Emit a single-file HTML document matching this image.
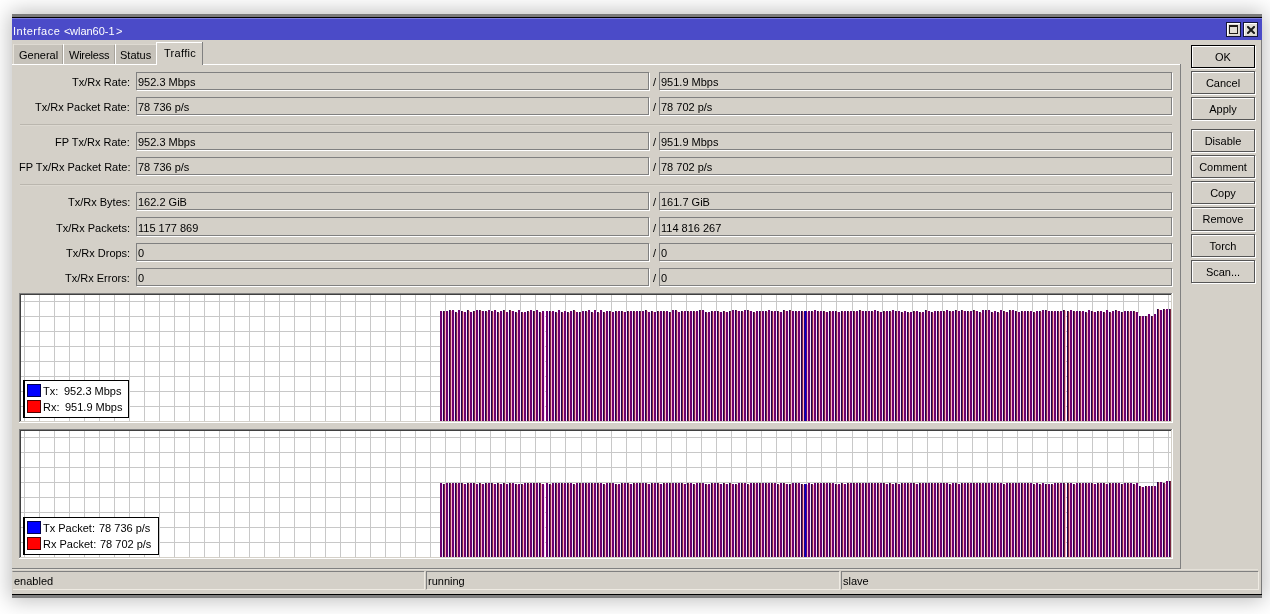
<!DOCTYPE html><html><head><meta charset="utf-8"><style>
html,body{margin:0;padding:0;width:1277px;height:614px;overflow:hidden;background:#fff;}
.r{position:absolute;}
.t{position:absolute;white-space:nowrap;will-change:transform;font-size:11px;line-height:13px;font-family:'Liberation Sans',sans-serif;color:#000;}
</style></head><body>
<div class="r" style="left:0;top:0;width:1270px;height:614px;overflow:hidden;">
<div class="r" style="left:12px;top:14px;width:1250px;height:584px;background:#d4d0c8;box-shadow:0 0 20px 2px rgba(0,0,0,0.27);"></div>
</div>
<div class="r" style="left:12px;top:14px;width:1250px;height:3px;background:#7a7a7a;"></div>
<div class="r" style="left:12px;top:17px;width:1250px;height:1px;background:#000;"></div>
<div class="r" style="left:12px;top:18px;width:1250px;height:1px;background:#7b7bdc;"></div>
<div class="r" style="left:12px;top:19px;width:1250px;height:21px;background:#4b4bc8;"></div>
<div class="r" style="left:12px;top:594px;width:1250px;height:1px;background:#000;"></div>
<div class="r" style="left:12px;top:595px;width:1250px;height:3px;background:#808080;"></div>
<div class="r" style="left:1261px;top:40px;width:1px;height:554px;background:#7a7a7a;"></div>
<div class="t" style="left:13px;top:25px;color:#fff;letter-spacing:0.5px;">Interface</div>
<div class="t" style="left:64px;top:25px;color:#fff;">&lt;</div>
<div class="t" style="left:70px;top:25px;color:#fff;">wlan60-1</div>
<div class="t" style="left:116px;top:25px;color:#fff;">&gt;</div>
<div class="r" style="left:1226px;top:22px;width:13px;height:13px;border:1px solid #141438;background:#e2ded6;box-shadow:inset 1px 1px 0 #fff,inset -1px -1px 0 #d8d4cc;"></div>
<div class="r" style="left:1243px;top:22px;width:13px;height:13px;border:1px solid #141438;background:#e2ded6;box-shadow:inset 1px 1px 0 #fff,inset -1px -1px 0 #d8d4cc;"></div>
<div class="r" style="left:1229px;top:25px;width:9px;height:9px;background:transparent;border:1px solid #201c18;border-top-width:2px;box-sizing:border-box;"></div>
<svg class="r" style="left:1247px;top:26px" width="8" height="8" viewBox="0 0 8 8"><path d="M1 1 L7 7 M7 1 L1 7" stroke="#1a1a1a" stroke-width="2" stroke-linecap="square"/></svg>
<div class="r" style="left:12px;top:64px;width:144px;height:1px;background:#fff;"></div>
<div class="r" style="left:203px;top:64px;width:977px;height:1px;background:#fff;"></div>
<div class="r" style="left:13px;top:44px;width:49px;height:1px;background:#dedad2;"></div>
<div class="r" style="left:13px;top:44px;width:1px;height:20px;background:#e6e2da;"></div>
<div class="r" style="left:14px;top:45px;width:48px;height:19px;background:#c6c2ba;"></div>
<div class="t" style="left:19px;top:49px;">General</div>
<div class="r" style="left:63px;top:44px;width:51px;height:1px;background:#dedad2;"></div>
<div class="r" style="left:63px;top:44px;width:1px;height:20px;background:#e6e2da;"></div>
<div class="r" style="left:64px;top:45px;width:50px;height:19px;background:#c6c2ba;"></div>
<div class="t" style="left:69px;top:49px;letter-spacing:-0.25px;">Wireless</div>
<div class="r" style="left:115px;top:44px;width:41px;height:1px;background:#dedad2;"></div>
<div class="r" style="left:115px;top:44px;width:1px;height:20px;background:#e6e2da;"></div>
<div class="r" style="left:116px;top:45px;width:40px;height:19px;background:#c6c2ba;"></div>
<div class="t" style="left:120px;top:49px;">Status</div>
<div class="r" style="left:62px;top:45px;width:1px;height:19px;background:#a8a49c;"></div>
<div class="r" style="left:114px;top:45px;width:1px;height:19px;background:#a8a49c;"></div>
<div class="r" style="left:115px;top:44px;width:1px;height:20px;background:#fff;"></div>
<div class="r" style="left:63px;top:44px;width:1px;height:20px;background:#fff;"></div>
<div class="r" style="left:156px;top:42px;width:46px;height:1px;background:#fff;"></div>
<div class="r" style="left:156px;top:42px;width:1px;height:23px;background:#fff;"></div>
<div class="r" style="left:157px;top:43px;width:45px;height:22px;background:#d4d0c8;"></div>
<div class="r" style="left:202px;top:42px;width:1px;height:23px;background:#808080;"></div>
<div class="t" style="left:164px;top:47px;letter-spacing:0.3px;">Traffic</div>
<div class="r" style="left:1180px;top:64px;width:1px;height:505px;background:#808080;"></div>
<div class="r" style="left:12px;top:568px;width:1169px;height:1px;background:#808080;"></div>
<div class="r" style="left:12px;top:569px;width:1246px;height:1px;background:#e4e0d8;"></div>
<div class="r" style="left:136px;top:72px;width:511px;height:16px;border:1px solid #808080;background:#d4d0c8;box-shadow:1px 1px 0 #fff;"></div>
<div class="r" style="left:659px;top:72px;width:511px;height:16px;border:1px solid #808080;background:#d4d0c8;box-shadow:1px 1px 0 #fff;"></div>
<div class="t" style="right:1147px;top:76px;">Tx/Rx Rate:</div>
<div class="t" style="left:138px;top:76px;">952.3 Mbps</div>
<div class="t" style="left:661px;top:76px;">951.9 Mbps</div>
<div class="t" style="left:653px;top:76px;">/</div>
<div class="r" style="left:136px;top:97px;width:511px;height:16px;border:1px solid #808080;background:#d4d0c8;box-shadow:1px 1px 0 #fff;"></div>
<div class="r" style="left:659px;top:97px;width:511px;height:16px;border:1px solid #808080;background:#d4d0c8;box-shadow:1px 1px 0 #fff;"></div>
<div class="t" style="right:1147px;top:101px;">Tx/Rx Packet Rate:</div>
<div class="t" style="left:138px;top:101px;">78 736 p/s</div>
<div class="t" style="left:661px;top:101px;">78 702 p/s</div>
<div class="t" style="left:653px;top:101px;">/</div>
<div class="r" style="left:136px;top:132px;width:511px;height:16px;border:1px solid #808080;background:#d4d0c8;box-shadow:1px 1px 0 #fff;"></div>
<div class="r" style="left:659px;top:132px;width:511px;height:16px;border:1px solid #808080;background:#d4d0c8;box-shadow:1px 1px 0 #fff;"></div>
<div class="t" style="right:1147px;top:136px;">FP Tx/Rx Rate:</div>
<div class="t" style="left:138px;top:136px;">952.3 Mbps</div>
<div class="t" style="left:661px;top:136px;">951.9 Mbps</div>
<div class="t" style="left:653px;top:136px;">/</div>
<div class="r" style="left:136px;top:157px;width:511px;height:16px;border:1px solid #808080;background:#d4d0c8;box-shadow:1px 1px 0 #fff;"></div>
<div class="r" style="left:659px;top:157px;width:511px;height:16px;border:1px solid #808080;background:#d4d0c8;box-shadow:1px 1px 0 #fff;"></div>
<div class="t" style="right:1147px;top:161px;">FP Tx/Rx Packet Rate:</div>
<div class="t" style="left:138px;top:161px;">78 736 p/s</div>
<div class="t" style="left:661px;top:161px;">78 702 p/s</div>
<div class="t" style="left:653px;top:161px;">/</div>
<div class="r" style="left:136px;top:192px;width:511px;height:16px;border:1px solid #808080;background:#d4d0c8;box-shadow:1px 1px 0 #fff;"></div>
<div class="r" style="left:659px;top:192px;width:511px;height:16px;border:1px solid #808080;background:#d4d0c8;box-shadow:1px 1px 0 #fff;"></div>
<div class="t" style="right:1147px;top:196px;">Tx/Rx Bytes:</div>
<div class="t" style="left:138px;top:196px;">162.2 GiB</div>
<div class="t" style="left:661px;top:196px;">161.7 GiB</div>
<div class="t" style="left:653px;top:196px;">/</div>
<div class="r" style="left:136px;top:217px;width:511px;height:17px;border:1px solid #808080;background:#d4d0c8;box-shadow:1px 1px 0 #fff;"></div>
<div class="r" style="left:659px;top:217px;width:511px;height:17px;border:1px solid #808080;background:#d4d0c8;box-shadow:1px 1px 0 #fff;"></div>
<div class="t" style="right:1147px;top:222px;">Tx/Rx Packets:</div>
<div class="t" style="left:138px;top:222px;">115 177 869</div>
<div class="t" style="left:661px;top:222px;">114 816 267</div>
<div class="t" style="left:653px;top:222px;">/</div>
<div class="r" style="left:136px;top:243px;width:511px;height:16px;border:1px solid #808080;background:#d4d0c8;box-shadow:1px 1px 0 #fff;"></div>
<div class="r" style="left:659px;top:243px;width:511px;height:16px;border:1px solid #808080;background:#d4d0c8;box-shadow:1px 1px 0 #fff;"></div>
<div class="t" style="right:1147px;top:247px;">Tx/Rx Drops:</div>
<div class="t" style="left:138px;top:247px;">0</div>
<div class="t" style="left:661px;top:247px;">0</div>
<div class="t" style="left:653px;top:247px;">/</div>
<div class="r" style="left:136px;top:268px;width:511px;height:16px;border:1px solid #808080;background:#d4d0c8;box-shadow:1px 1px 0 #fff;"></div>
<div class="r" style="left:659px;top:268px;width:511px;height:16px;border:1px solid #808080;background:#d4d0c8;box-shadow:1px 1px 0 #fff;"></div>
<div class="t" style="right:1147px;top:272px;">Tx/Rx Errors:</div>
<div class="t" style="left:138px;top:272px;">0</div>
<div class="t" style="left:661px;top:272px;">0</div>
<div class="t" style="left:653px;top:272px;">/</div>
<div class="r" style="left:20px;top:124px;width:1152px;height:1px;background:#bab6ae;"></div>
<div class="r" style="left:20px;top:125px;width:1152px;height:1px;background:#dcd8d0;"></div>
<div class="r" style="left:20px;top:184px;width:1152px;height:1px;background:#bab6ae;"></div>
<div class="r" style="left:20px;top:185px;width:1152px;height:1px;background:#dcd8d0;"></div>
<div class="r" style="left:19px;top:293px;width:1153px;height:1px;background:#808080;"></div>
<div class="r" style="left:19px;top:293px;width:1px;height:129px;background:#808080;"></div>
<div class="r" style="left:20px;top:294px;width:1151px;height:1px;background:#404040;"></div>
<div class="r" style="left:20px;top:294px;width:1px;height:127px;background:#404040;"></div>
<div class="r" style="left:19px;top:422px;width:1154px;height:1px;background:#fff;"></div>
<div class="r" style="left:1172px;top:293px;width:1px;height:130px;background:#fff;"></div>
<div class="r" style="left:21px;top:295px;width:1150px;height:126px;background:#fff;"></div>
<div class="r" style="left:20px;top:421px;width:1152px;height:1px;background:#d4d0c8;"></div>
<div class="r" style="left:1171px;top:294px;width:1px;height:128px;background:#d4d0c8;"></div>
<svg class="r" style="left:21px;top:295px" width="1150" height="126"><rect x="3" y="0" width="1" height="126" fill="#c8c8c8"/><rect x="18" y="0" width="1" height="126" fill="#c8c8c8"/><rect x="33" y="0" width="1" height="126" fill="#c8c8c8"/><rect x="48" y="0" width="1" height="126" fill="#c8c8c8"/><rect x="63" y="0" width="1" height="126" fill="#c8c8c8"/><rect x="78" y="0" width="1" height="126" fill="#c8c8c8"/><rect x="93" y="0" width="1" height="126" fill="#c8c8c8"/><rect x="108" y="0" width="1" height="126" fill="#c8c8c8"/><rect x="123" y="0" width="1" height="126" fill="#c8c8c8"/><rect x="138" y="0" width="1" height="126" fill="#c8c8c8"/><rect x="153" y="0" width="1" height="126" fill="#c8c8c8"/><rect x="168" y="0" width="1" height="126" fill="#c8c8c8"/><rect x="183" y="0" width="1" height="126" fill="#c8c8c8"/><rect x="198" y="0" width="1" height="126" fill="#c8c8c8"/><rect x="213" y="0" width="1" height="126" fill="#c8c8c8"/><rect x="228" y="0" width="1" height="126" fill="#c8c8c8"/><rect x="243" y="0" width="1" height="126" fill="#c8c8c8"/><rect x="258" y="0" width="1" height="126" fill="#c8c8c8"/><rect x="273" y="0" width="1" height="126" fill="#c8c8c8"/><rect x="289" y="0" width="1" height="126" fill="#c8c8c8"/><rect x="304" y="0" width="1" height="126" fill="#c8c8c8"/><rect x="319" y="0" width="1" height="126" fill="#c8c8c8"/><rect x="334" y="0" width="1" height="126" fill="#c8c8c8"/><rect x="349" y="0" width="1" height="126" fill="#c8c8c8"/><rect x="364" y="0" width="1" height="126" fill="#c8c8c8"/><rect x="379" y="0" width="1" height="126" fill="#c8c8c8"/><rect x="394" y="0" width="1" height="126" fill="#c8c8c8"/><rect x="409" y="0" width="1" height="126" fill="#c8c8c8"/><rect x="424" y="0" width="1" height="126" fill="#c8c8c8"/><rect x="439" y="0" width="1" height="126" fill="#c8c8c8"/><rect x="454" y="0" width="1" height="126" fill="#c8c8c8"/><rect x="469" y="0" width="1" height="126" fill="#c8c8c8"/><rect x="484" y="0" width="1" height="126" fill="#c8c8c8"/><rect x="499" y="0" width="1" height="126" fill="#c8c8c8"/><rect x="514" y="0" width="1" height="126" fill="#c8c8c8"/><rect x="529" y="0" width="1" height="126" fill="#c8c8c8"/><rect x="544" y="0" width="1" height="126" fill="#c8c8c8"/><rect x="560" y="0" width="1" height="126" fill="#c8c8c8"/><rect x="575" y="0" width="1" height="126" fill="#c8c8c8"/><rect x="590" y="0" width="1" height="126" fill="#c8c8c8"/><rect x="605" y="0" width="1" height="126" fill="#c8c8c8"/><rect x="620" y="0" width="1" height="126" fill="#c8c8c8"/><rect x="635" y="0" width="1" height="126" fill="#c8c8c8"/><rect x="650" y="0" width="1" height="126" fill="#c8c8c8"/><rect x="665" y="0" width="1" height="126" fill="#c8c8c8"/><rect x="680" y="0" width="1" height="126" fill="#c8c8c8"/><rect x="695" y="0" width="1" height="126" fill="#c8c8c8"/><rect x="710" y="0" width="1" height="126" fill="#c8c8c8"/><rect x="725" y="0" width="1" height="126" fill="#c8c8c8"/><rect x="740" y="0" width="1" height="126" fill="#c8c8c8"/><rect x="755" y="0" width="1" height="126" fill="#c8c8c8"/><rect x="770" y="0" width="1" height="126" fill="#c8c8c8"/><rect x="785" y="0" width="1" height="126" fill="#c8c8c8"/><rect x="800" y="0" width="1" height="126" fill="#c8c8c8"/><rect x="815" y="0" width="1" height="126" fill="#c8c8c8"/><rect x="831" y="0" width="1" height="126" fill="#c8c8c8"/><rect x="846" y="0" width="1" height="126" fill="#c8c8c8"/><rect x="861" y="0" width="1" height="126" fill="#c8c8c8"/><rect x="876" y="0" width="1" height="126" fill="#c8c8c8"/><rect x="891" y="0" width="1" height="126" fill="#c8c8c8"/><rect x="906" y="0" width="1" height="126" fill="#c8c8c8"/><rect x="921" y="0" width="1" height="126" fill="#c8c8c8"/><rect x="936" y="0" width="1" height="126" fill="#c8c8c8"/><rect x="951" y="0" width="1" height="126" fill="#c8c8c8"/><rect x="966" y="0" width="1" height="126" fill="#c8c8c8"/><rect x="981" y="0" width="1" height="126" fill="#c8c8c8"/><rect x="996" y="0" width="1" height="126" fill="#c8c8c8"/><rect x="1011" y="0" width="1" height="126" fill="#c8c8c8"/><rect x="1026" y="0" width="1" height="126" fill="#c8c8c8"/><rect x="1041" y="0" width="1" height="126" fill="#c8c8c8"/><rect x="1056" y="0" width="1" height="126" fill="#c8c8c8"/><rect x="1071" y="0" width="1" height="126" fill="#c8c8c8"/><rect x="1086" y="0" width="1" height="126" fill="#c8c8c8"/><rect x="1102" y="0" width="1" height="126" fill="#c8c8c8"/><rect x="1117" y="0" width="1" height="126" fill="#c8c8c8"/><rect x="1132" y="0" width="1" height="126" fill="#c8c8c8"/><rect x="1147" y="0" width="1" height="126" fill="#c8c8c8"/><rect x="0" y="6" width="1150" height="1" fill="#c8c8c8"/><rect x="0" y="21" width="1150" height="1" fill="#c8c8c8"/><rect x="0" y="36" width="1150" height="1" fill="#c8c8c8"/><rect x="0" y="51" width="1150" height="1" fill="#c8c8c8"/><rect x="0" y="66" width="1150" height="1" fill="#c8c8c8"/><rect x="0" y="81" width="1150" height="1" fill="#c8c8c8"/><rect x="0" y="96" width="1150" height="1" fill="#c8c8c8"/><rect x="0" y="111" width="1150" height="1" fill="#c8c8c8"/><rect x="419" y="16" width="2" height="110" fill="#700070"/><rect x="421" y="17" width="1" height="109" fill="#f8e0f8"/><rect x="422" y="16" width="1" height="110" fill="#200050"/><rect x="423" y="16" width="1" height="110" fill="#7a2840"/><rect x="424" y="17" width="1" height="109" fill="#ffb0c4"/><rect x="425" y="16" width="2" height="110" fill="#700070"/><rect x="427" y="17" width="1" height="109" fill="#f8e0f8"/><rect x="428" y="15" width="1" height="111" fill="#200050"/><rect x="429" y="15" width="1" height="111" fill="#7a2840"/><rect x="430" y="16" width="1" height="110" fill="#ffb0c4"/><rect x="431" y="15" width="2" height="111" fill="#700070"/><rect x="433" y="16" width="1" height="110" fill="#f8e0f8"/><rect x="434" y="17" width="1" height="109" fill="#200050"/><rect x="435" y="17" width="1" height="109" fill="#7a2840"/><rect x="436" y="18" width="1" height="108" fill="#ffb0c4"/><rect x="437" y="15" width="2" height="111" fill="#700070"/><rect x="439" y="16" width="1" height="110" fill="#f8e0f8"/><rect x="440" y="16" width="1" height="110" fill="#200050"/><rect x="441" y="16" width="1" height="110" fill="#7a2840"/><rect x="442" y="17" width="1" height="109" fill="#ffb0c4"/><rect x="443" y="17" width="2" height="109" fill="#700070"/><rect x="445" y="18" width="1" height="108" fill="#f8e0f8"/><rect x="446" y="15" width="1" height="111" fill="#200050"/><rect x="447" y="15" width="1" height="111" fill="#7a2840"/><rect x="448" y="16" width="1" height="110" fill="#ffb0c4"/><rect x="449" y="17" width="2" height="109" fill="#700070"/><rect x="451" y="18" width="1" height="108" fill="#f8e0f8"/><rect x="452" y="16" width="1" height="110" fill="#200050"/><rect x="453" y="16" width="1" height="110" fill="#7a2840"/><rect x="454" y="17" width="1" height="109" fill="#ffb0c4"/><rect x="455" y="15" width="2" height="111" fill="#700070"/><rect x="457" y="16" width="1" height="110" fill="#f8e0f8"/><rect x="458" y="15" width="1" height="111" fill="#200050"/><rect x="459" y="15" width="1" height="111" fill="#7a2840"/><rect x="460" y="16" width="1" height="110" fill="#ffb0c4"/><rect x="461" y="16" width="2" height="110" fill="#700070"/><rect x="463" y="17" width="1" height="109" fill="#f8e0f8"/><rect x="464" y="16" width="1" height="110" fill="#200050"/><rect x="465" y="16" width="1" height="110" fill="#7a2840"/><rect x="466" y="17" width="1" height="109" fill="#ffb0c4"/><rect x="467" y="15" width="2" height="111" fill="#700070"/><rect x="469" y="16" width="1" height="110" fill="#f8e0f8"/><rect x="470" y="16" width="1" height="110" fill="#200050"/><rect x="471" y="16" width="1" height="110" fill="#7a2840"/><rect x="472" y="17" width="1" height="109" fill="#ffb0c4"/><rect x="473" y="15" width="2" height="111" fill="#700070"/><rect x="475" y="16" width="1" height="110" fill="#f8e0f8"/><rect x="476" y="17" width="1" height="109" fill="#200050"/><rect x="477" y="17" width="1" height="109" fill="#7a2840"/><rect x="478" y="18" width="1" height="108" fill="#ffb0c4"/><rect x="479" y="16" width="2" height="110" fill="#700070"/><rect x="481" y="17" width="1" height="109" fill="#f8e0f8"/><rect x="482" y="15" width="1" height="111" fill="#200050"/><rect x="483" y="15" width="1" height="111" fill="#7a2840"/><rect x="484" y="16" width="1" height="110" fill="#ffb0c4"/><rect x="485" y="17" width="2" height="109" fill="#700070"/><rect x="487" y="18" width="1" height="108" fill="#f8e0f8"/><rect x="488" y="15" width="1" height="111" fill="#200050"/><rect x="489" y="15" width="1" height="111" fill="#7a2840"/><rect x="490" y="16" width="1" height="110" fill="#ffb0c4"/><rect x="491" y="16" width="2" height="110" fill="#700070"/><rect x="493" y="17" width="1" height="109" fill="#f8e0f8"/><rect x="494" y="17" width="1" height="109" fill="#200050"/><rect x="495" y="17" width="1" height="109" fill="#7a2840"/><rect x="496" y="18" width="1" height="108" fill="#ffb0c4"/><rect x="497" y="15" width="2" height="111" fill="#700070"/><rect x="499" y="16" width="1" height="110" fill="#f8e0f8"/><rect x="500" y="17" width="1" height="109" fill="#200050"/><rect x="501" y="17" width="1" height="109" fill="#7a2840"/><rect x="502" y="18" width="1" height="108" fill="#ffb0c4"/><rect x="503" y="17" width="2" height="109" fill="#700070"/><rect x="505" y="18" width="1" height="108" fill="#f8e0f8"/><rect x="506" y="16" width="1" height="110" fill="#200050"/><rect x="507" y="16" width="1" height="110" fill="#7a2840"/><rect x="508" y="17" width="1" height="109" fill="#ffb0c4"/><rect x="509" y="15" width="2" height="111" fill="#700070"/><rect x="511" y="16" width="1" height="110" fill="#f8e0f8"/><rect x="512" y="16" width="1" height="110" fill="#200050"/><rect x="513" y="16" width="1" height="110" fill="#7a2840"/><rect x="514" y="17" width="1" height="109" fill="#ffb0c4"/><rect x="515" y="15" width="2" height="111" fill="#700070"/><rect x="517" y="16" width="1" height="110" fill="#f8e0f8"/><rect x="518" y="17" width="1" height="109" fill="#200050"/><rect x="519" y="17" width="1" height="109" fill="#7a2840"/><rect x="520" y="18" width="1" height="108" fill="#ffb0c4"/><rect x="521" y="16" width="2" height="110" fill="#700070"/><rect x="523" y="17" width="1" height="109" fill="#f8e0f8"/><rect x="525" y="16" width="2" height="110" fill="#700070"/><rect x="527" y="17" width="1" height="109" fill="#f8e0f8"/><rect x="528" y="16" width="1" height="110" fill="#200050"/><rect x="529" y="16" width="1" height="110" fill="#7a2840"/><rect x="530" y="17" width="1" height="109" fill="#ffb0c4"/><rect x="531" y="16" width="2" height="110" fill="#700070"/><rect x="533" y="17" width="1" height="109" fill="#f8e0f8"/><rect x="534" y="17" width="1" height="109" fill="#200050"/><rect x="535" y="17" width="1" height="109" fill="#7a2840"/><rect x="536" y="18" width="1" height="108" fill="#ffb0c4"/><rect x="537" y="15" width="2" height="111" fill="#700070"/><rect x="539" y="16" width="1" height="110" fill="#f8e0f8"/><rect x="540" y="17" width="1" height="109" fill="#200050"/><rect x="541" y="17" width="1" height="109" fill="#7a2840"/><rect x="542" y="18" width="1" height="108" fill="#ffb0c4"/><rect x="543" y="16" width="2" height="110" fill="#700070"/><rect x="545" y="17" width="1" height="109" fill="#f8e0f8"/><rect x="546" y="17" width="1" height="109" fill="#200050"/><rect x="547" y="17" width="1" height="109" fill="#7a2840"/><rect x="548" y="18" width="1" height="108" fill="#ffb0c4"/><rect x="549" y="16" width="2" height="110" fill="#700070"/><rect x="551" y="17" width="1" height="109" fill="#f8e0f8"/><rect x="552" y="15" width="1" height="111" fill="#200050"/><rect x="553" y="15" width="1" height="111" fill="#7a2840"/><rect x="554" y="16" width="1" height="110" fill="#ffb0c4"/><rect x="555" y="17" width="2" height="109" fill="#700070"/><rect x="557" y="18" width="1" height="108" fill="#f8e0f8"/><rect x="558" y="17" width="1" height="109" fill="#200050"/><rect x="559" y="17" width="1" height="109" fill="#7a2840"/><rect x="560" y="18" width="1" height="108" fill="#ffb0c4"/><rect x="561" y="16" width="2" height="110" fill="#700070"/><rect x="563" y="17" width="1" height="109" fill="#f8e0f8"/><rect x="564" y="16" width="1" height="110" fill="#200050"/><rect x="565" y="16" width="1" height="110" fill="#7a2840"/><rect x="566" y="17" width="1" height="109" fill="#ffb0c4"/><rect x="567" y="15" width="2" height="111" fill="#700070"/><rect x="569" y="16" width="1" height="110" fill="#f8e0f8"/><rect x="570" y="17" width="1" height="109" fill="#200050"/><rect x="571" y="17" width="1" height="109" fill="#7a2840"/><rect x="572" y="18" width="1" height="108" fill="#ffb0c4"/><rect x="573" y="15" width="2" height="111" fill="#700070"/><rect x="575" y="16" width="1" height="110" fill="#f8e0f8"/><rect x="576" y="17" width="1" height="109" fill="#200050"/><rect x="577" y="17" width="1" height="109" fill="#7a2840"/><rect x="578" y="18" width="1" height="108" fill="#ffb0c4"/><rect x="579" y="15" width="2" height="111" fill="#700070"/><rect x="581" y="16" width="1" height="110" fill="#f8e0f8"/><rect x="582" y="17" width="1" height="109" fill="#200050"/><rect x="583" y="17" width="1" height="109" fill="#7a2840"/><rect x="584" y="18" width="1" height="108" fill="#ffb0c4"/><rect x="585" y="16" width="2" height="110" fill="#700070"/><rect x="587" y="17" width="1" height="109" fill="#f8e0f8"/><rect x="588" y="16" width="1" height="110" fill="#200050"/><rect x="589" y="16" width="1" height="110" fill="#7a2840"/><rect x="590" y="17" width="1" height="109" fill="#ffb0c4"/><rect x="591" y="17" width="2" height="109" fill="#700070"/><rect x="593" y="18" width="1" height="108" fill="#f8e0f8"/><rect x="594" y="16" width="1" height="110" fill="#200050"/><rect x="595" y="16" width="1" height="110" fill="#7a2840"/><rect x="596" y="17" width="1" height="109" fill="#ffb0c4"/><rect x="597" y="16" width="2" height="110" fill="#700070"/><rect x="599" y="17" width="1" height="109" fill="#f8e0f8"/><rect x="600" y="16" width="1" height="110" fill="#200050"/><rect x="601" y="16" width="1" height="110" fill="#7a2840"/><rect x="602" y="17" width="1" height="109" fill="#ffb0c4"/><rect x="603" y="17" width="2" height="109" fill="#700070"/><rect x="605" y="18" width="1" height="108" fill="#f8e0f8"/><rect x="606" y="16" width="1" height="110" fill="#200050"/><rect x="607" y="16" width="1" height="110" fill="#7a2840"/><rect x="608" y="17" width="1" height="109" fill="#ffb0c4"/><rect x="609" y="16" width="2" height="110" fill="#700070"/><rect x="611" y="17" width="1" height="109" fill="#f8e0f8"/><rect x="612" y="16" width="1" height="110" fill="#200050"/><rect x="613" y="16" width="1" height="110" fill="#7a2840"/><rect x="614" y="17" width="1" height="109" fill="#ffb0c4"/><rect x="615" y="16" width="2" height="110" fill="#700070"/><rect x="617" y="17" width="1" height="109" fill="#f8e0f8"/><rect x="618" y="16" width="1" height="110" fill="#200050"/><rect x="619" y="16" width="1" height="110" fill="#7a2840"/><rect x="620" y="17" width="1" height="109" fill="#ffb0c4"/><rect x="621" y="16" width="2" height="110" fill="#700070"/><rect x="623" y="17" width="1" height="109" fill="#f8e0f8"/><rect x="624" y="15" width="1" height="111" fill="#200050"/><rect x="625" y="15" width="1" height="111" fill="#7a2840"/><rect x="626" y="16" width="1" height="110" fill="#ffb0c4"/><rect x="627" y="17" width="2" height="109" fill="#700070"/><rect x="629" y="18" width="1" height="108" fill="#f8e0f8"/><rect x="630" y="16" width="1" height="110" fill="#200050"/><rect x="631" y="16" width="1" height="110" fill="#7a2840"/><rect x="632" y="17" width="1" height="109" fill="#ffb0c4"/><rect x="633" y="17" width="2" height="109" fill="#700070"/><rect x="635" y="18" width="1" height="108" fill="#f8e0f8"/><rect x="636" y="16" width="1" height="110" fill="#200050"/><rect x="637" y="16" width="1" height="110" fill="#7a2840"/><rect x="638" y="17" width="1" height="109" fill="#ffb0c4"/><rect x="639" y="16" width="2" height="110" fill="#700070"/><rect x="641" y="17" width="1" height="109" fill="#f8e0f8"/><rect x="642" y="16" width="1" height="110" fill="#200050"/><rect x="643" y="16" width="1" height="110" fill="#7a2840"/><rect x="644" y="17" width="1" height="109" fill="#ffb0c4"/><rect x="645" y="16" width="2" height="110" fill="#700070"/><rect x="647" y="17" width="1" height="109" fill="#f8e0f8"/><rect x="648" y="17" width="1" height="109" fill="#200050"/><rect x="649" y="17" width="1" height="109" fill="#7a2840"/><rect x="650" y="18" width="1" height="108" fill="#ffb0c4"/><rect x="651" y="15" width="2" height="111" fill="#700070"/><rect x="653" y="16" width="1" height="110" fill="#f8e0f8"/><rect x="654" y="15" width="1" height="111" fill="#200050"/><rect x="655" y="15" width="1" height="111" fill="#7a2840"/><rect x="656" y="16" width="1" height="110" fill="#ffb0c4"/><rect x="657" y="17" width="2" height="109" fill="#700070"/><rect x="659" y="18" width="1" height="108" fill="#f8e0f8"/><rect x="660" y="16" width="1" height="110" fill="#200050"/><rect x="661" y="16" width="1" height="110" fill="#7a2840"/><rect x="662" y="17" width="1" height="109" fill="#ffb0c4"/><rect x="663" y="16" width="2" height="110" fill="#700070"/><rect x="665" y="17" width="1" height="109" fill="#f8e0f8"/><rect x="666" y="16" width="1" height="110" fill="#200050"/><rect x="667" y="16" width="1" height="110" fill="#7a2840"/><rect x="668" y="17" width="1" height="109" fill="#ffb0c4"/><rect x="669" y="16" width="2" height="110" fill="#700070"/><rect x="671" y="17" width="1" height="109" fill="#f8e0f8"/><rect x="672" y="16" width="1" height="110" fill="#200050"/><rect x="673" y="16" width="1" height="110" fill="#7a2840"/><rect x="674" y="17" width="1" height="109" fill="#ffb0c4"/><rect x="675" y="16" width="2" height="110" fill="#700070"/><rect x="677" y="17" width="1" height="109" fill="#f8e0f8"/><rect x="678" y="15" width="1" height="111" fill="#200050"/><rect x="679" y="15" width="1" height="111" fill="#7a2840"/><rect x="680" y="16" width="1" height="110" fill="#ffb0c4"/><rect x="681" y="15" width="2" height="111" fill="#700070"/><rect x="683" y="16" width="1" height="110" fill="#f8e0f8"/><rect x="684" y="17" width="1" height="109" fill="#200050"/><rect x="685" y="17" width="1" height="109" fill="#7a2840"/><rect x="686" y="18" width="1" height="108" fill="#ffb0c4"/><rect x="687" y="17" width="2" height="109" fill="#700070"/><rect x="689" y="18" width="1" height="108" fill="#f8e0f8"/><rect x="690" y="16" width="1" height="110" fill="#200050"/><rect x="691" y="16" width="1" height="110" fill="#7a2840"/><rect x="692" y="17" width="1" height="109" fill="#ffb0c4"/><rect x="693" y="16" width="2" height="110" fill="#700070"/><rect x="695" y="17" width="1" height="109" fill="#f8e0f8"/><rect x="696" y="16" width="1" height="110" fill="#200050"/><rect x="697" y="16" width="1" height="110" fill="#7a2840"/><rect x="698" y="17" width="1" height="109" fill="#ffb0c4"/><rect x="699" y="17" width="2" height="109" fill="#700070"/><rect x="701" y="18" width="1" height="108" fill="#f8e0f8"/><rect x="702" y="16" width="1" height="110" fill="#200050"/><rect x="703" y="16" width="1" height="110" fill="#7a2840"/><rect x="704" y="17" width="1" height="109" fill="#ffb0c4"/><rect x="705" y="17" width="2" height="109" fill="#700070"/><rect x="707" y="18" width="1" height="108" fill="#f8e0f8"/><rect x="708" y="16" width="1" height="110" fill="#200050"/><rect x="709" y="16" width="1" height="110" fill="#7a2840"/><rect x="710" y="17" width="1" height="109" fill="#ffb0c4"/><rect x="711" y="15" width="2" height="111" fill="#700070"/><rect x="713" y="16" width="1" height="110" fill="#f8e0f8"/><rect x="714" y="15" width="1" height="111" fill="#200050"/><rect x="715" y="15" width="1" height="111" fill="#7a2840"/><rect x="716" y="16" width="1" height="110" fill="#ffb0c4"/><rect x="717" y="16" width="2" height="110" fill="#700070"/><rect x="719" y="17" width="1" height="109" fill="#f8e0f8"/><rect x="720" y="16" width="1" height="110" fill="#200050"/><rect x="721" y="16" width="1" height="110" fill="#7a2840"/><rect x="722" y="17" width="1" height="109" fill="#ffb0c4"/><rect x="723" y="15" width="2" height="111" fill="#700070"/><rect x="725" y="16" width="1" height="110" fill="#f8e0f8"/><rect x="726" y="15" width="1" height="111" fill="#200050"/><rect x="727" y="15" width="1" height="111" fill="#7a2840"/><rect x="728" y="16" width="1" height="110" fill="#ffb0c4"/><rect x="729" y="16" width="2" height="110" fill="#700070"/><rect x="731" y="17" width="1" height="109" fill="#f8e0f8"/><rect x="732" y="17" width="1" height="109" fill="#200050"/><rect x="733" y="17" width="1" height="109" fill="#7a2840"/><rect x="734" y="18" width="1" height="108" fill="#ffb0c4"/><rect x="735" y="16" width="2" height="110" fill="#700070"/><rect x="737" y="17" width="1" height="109" fill="#f8e0f8"/><rect x="738" y="16" width="1" height="110" fill="#200050"/><rect x="739" y="16" width="1" height="110" fill="#7a2840"/><rect x="740" y="17" width="1" height="109" fill="#ffb0c4"/><rect x="741" y="16" width="2" height="110" fill="#700070"/><rect x="743" y="17" width="1" height="109" fill="#f8e0f8"/><rect x="744" y="16" width="1" height="110" fill="#200050"/><rect x="745" y="16" width="1" height="110" fill="#7a2840"/><rect x="746" y="17" width="1" height="109" fill="#ffb0c4"/><rect x="747" y="15" width="2" height="111" fill="#700070"/><rect x="749" y="16" width="1" height="110" fill="#f8e0f8"/><rect x="750" y="16" width="1" height="110" fill="#200050"/><rect x="751" y="16" width="1" height="110" fill="#7a2840"/><rect x="752" y="17" width="1" height="109" fill="#ffb0c4"/><rect x="753" y="16" width="2" height="110" fill="#700070"/><rect x="755" y="17" width="1" height="109" fill="#f8e0f8"/><rect x="756" y="16" width="1" height="110" fill="#200050"/><rect x="757" y="16" width="1" height="110" fill="#7a2840"/><rect x="758" y="17" width="1" height="109" fill="#ffb0c4"/><rect x="759" y="17" width="2" height="109" fill="#700070"/><rect x="761" y="18" width="1" height="108" fill="#f8e0f8"/><rect x="762" y="15" width="1" height="111" fill="#200050"/><rect x="763" y="15" width="1" height="111" fill="#7a2840"/><rect x="764" y="16" width="1" height="110" fill="#ffb0c4"/><rect x="765" y="16" width="2" height="110" fill="#700070"/><rect x="767" y="17" width="1" height="109" fill="#f8e0f8"/><rect x="768" y="15" width="1" height="111" fill="#200050"/><rect x="769" y="15" width="1" height="111" fill="#7a2840"/><rect x="770" y="16" width="1" height="110" fill="#ffb0c4"/><rect x="771" y="16" width="2" height="110" fill="#700070"/><rect x="773" y="17" width="1" height="109" fill="#f8e0f8"/><rect x="774" y="16" width="1" height="110" fill="#200050"/><rect x="775" y="16" width="1" height="110" fill="#7a2840"/><rect x="776" y="17" width="1" height="109" fill="#ffb0c4"/><rect x="777" y="16" width="2" height="110" fill="#700070"/><rect x="779" y="17" width="1" height="109" fill="#f8e0f8"/><rect x="780" y="16" width="1" height="110" fill="#200050"/><rect x="781" y="16" width="1" height="110" fill="#7a2840"/><rect x="782" y="17" width="1" height="109" fill="#ffb0c4"/><rect x="783" y="16" width="1" height="110" fill="#300070"/><rect x="784" y="16" width="1" height="110" fill="#0000d0"/><rect x="785" y="16" width="1" height="110" fill="#500080"/><rect x="786" y="17" width="1" height="109" fill="#ffb0c4"/><rect x="787" y="16" width="2" height="110" fill="#700070"/><rect x="789" y="17" width="1" height="109" fill="#f8e0f8"/><rect x="790" y="16" width="1" height="110" fill="#200050"/><rect x="791" y="16" width="1" height="110" fill="#7a2840"/><rect x="792" y="17" width="1" height="109" fill="#ffb0c4"/><rect x="793" y="15" width="2" height="111" fill="#700070"/><rect x="795" y="16" width="1" height="110" fill="#f8e0f8"/><rect x="796" y="16" width="1" height="110" fill="#200050"/><rect x="797" y="16" width="1" height="110" fill="#7a2840"/><rect x="798" y="17" width="1" height="109" fill="#ffb0c4"/><rect x="799" y="16" width="2" height="110" fill="#700070"/><rect x="801" y="17" width="1" height="109" fill="#f8e0f8"/><rect x="802" y="16" width="1" height="110" fill="#200050"/><rect x="803" y="16" width="1" height="110" fill="#7a2840"/><rect x="804" y="17" width="1" height="109" fill="#ffb0c4"/><rect x="805" y="17" width="2" height="109" fill="#700070"/><rect x="807" y="18" width="1" height="108" fill="#f8e0f8"/><rect x="808" y="16" width="1" height="110" fill="#200050"/><rect x="809" y="16" width="1" height="110" fill="#7a2840"/><rect x="810" y="17" width="1" height="109" fill="#ffb0c4"/><rect x="811" y="16" width="2" height="110" fill="#700070"/><rect x="813" y="17" width="1" height="109" fill="#f8e0f8"/><rect x="814" y="16" width="1" height="110" fill="#200050"/><rect x="815" y="16" width="1" height="110" fill="#7a2840"/><rect x="816" y="17" width="1" height="109" fill="#ffb0c4"/><rect x="817" y="17" width="2" height="109" fill="#700070"/><rect x="819" y="18" width="1" height="108" fill="#f8e0f8"/><rect x="820" y="16" width="1" height="110" fill="#200050"/><rect x="821" y="16" width="1" height="110" fill="#7a2840"/><rect x="822" y="17" width="1" height="109" fill="#ffb0c4"/><rect x="823" y="16" width="2" height="110" fill="#700070"/><rect x="825" y="17" width="1" height="109" fill="#f8e0f8"/><rect x="826" y="16" width="1" height="110" fill="#200050"/><rect x="827" y="16" width="1" height="110" fill="#7a2840"/><rect x="828" y="17" width="1" height="109" fill="#ffb0c4"/><rect x="829" y="16" width="2" height="110" fill="#700070"/><rect x="831" y="17" width="1" height="109" fill="#f8e0f8"/><rect x="832" y="16" width="1" height="110" fill="#200050"/><rect x="833" y="16" width="1" height="110" fill="#7a2840"/><rect x="834" y="17" width="1" height="109" fill="#ffb0c4"/><rect x="835" y="16" width="2" height="110" fill="#700070"/><rect x="837" y="17" width="1" height="109" fill="#f8e0f8"/><rect x="838" y="15" width="1" height="111" fill="#200050"/><rect x="839" y="15" width="1" height="111" fill="#7a2840"/><rect x="840" y="16" width="1" height="110" fill="#ffb0c4"/><rect x="841" y="16" width="2" height="110" fill="#700070"/><rect x="843" y="17" width="1" height="109" fill="#f8e0f8"/><rect x="844" y="16" width="1" height="110" fill="#200050"/><rect x="845" y="16" width="1" height="110" fill="#7a2840"/><rect x="846" y="17" width="1" height="109" fill="#ffb0c4"/><rect x="847" y="16" width="2" height="110" fill="#700070"/><rect x="849" y="17" width="1" height="109" fill="#f8e0f8"/><rect x="850" y="16" width="1" height="110" fill="#200050"/><rect x="851" y="16" width="1" height="110" fill="#7a2840"/><rect x="852" y="17" width="1" height="109" fill="#ffb0c4"/><rect x="853" y="15" width="2" height="111" fill="#700070"/><rect x="855" y="16" width="1" height="110" fill="#f8e0f8"/><rect x="856" y="16" width="1" height="110" fill="#200050"/><rect x="857" y="16" width="1" height="110" fill="#7a2840"/><rect x="858" y="17" width="1" height="109" fill="#ffb0c4"/><rect x="859" y="17" width="2" height="109" fill="#700070"/><rect x="861" y="18" width="1" height="108" fill="#f8e0f8"/><rect x="862" y="16" width="1" height="110" fill="#200050"/><rect x="863" y="16" width="1" height="110" fill="#7a2840"/><rect x="864" y="17" width="1" height="109" fill="#ffb0c4"/><rect x="865" y="16" width="2" height="110" fill="#700070"/><rect x="867" y="17" width="1" height="109" fill="#f8e0f8"/><rect x="868" y="16" width="1" height="110" fill="#200050"/><rect x="869" y="16" width="1" height="110" fill="#7a2840"/><rect x="870" y="17" width="1" height="109" fill="#ffb0c4"/><rect x="871" y="15" width="2" height="111" fill="#700070"/><rect x="873" y="16" width="1" height="110" fill="#f8e0f8"/><rect x="874" y="16" width="1" height="110" fill="#200050"/><rect x="875" y="16" width="1" height="110" fill="#7a2840"/><rect x="876" y="17" width="1" height="109" fill="#ffb0c4"/><rect x="877" y="16" width="2" height="110" fill="#700070"/><rect x="879" y="17" width="1" height="109" fill="#f8e0f8"/><rect x="880" y="17" width="1" height="109" fill="#200050"/><rect x="881" y="17" width="1" height="109" fill="#7a2840"/><rect x="882" y="18" width="1" height="108" fill="#ffb0c4"/><rect x="883" y="16" width="2" height="110" fill="#700070"/><rect x="885" y="17" width="1" height="109" fill="#f8e0f8"/><rect x="886" y="17" width="1" height="109" fill="#200050"/><rect x="887" y="17" width="1" height="109" fill="#7a2840"/><rect x="888" y="18" width="1" height="108" fill="#ffb0c4"/><rect x="889" y="17" width="2" height="109" fill="#700070"/><rect x="891" y="18" width="1" height="108" fill="#f8e0f8"/><rect x="892" y="16" width="1" height="110" fill="#200050"/><rect x="893" y="16" width="1" height="110" fill="#7a2840"/><rect x="894" y="17" width="1" height="109" fill="#ffb0c4"/><rect x="895" y="16" width="2" height="110" fill="#700070"/><rect x="897" y="17" width="1" height="109" fill="#f8e0f8"/><rect x="898" y="17" width="1" height="109" fill="#200050"/><rect x="899" y="17" width="1" height="109" fill="#7a2840"/><rect x="900" y="18" width="1" height="108" fill="#ffb0c4"/><rect x="901" y="17" width="2" height="109" fill="#700070"/><rect x="903" y="18" width="1" height="108" fill="#f8e0f8"/><rect x="904" y="15" width="1" height="111" fill="#200050"/><rect x="905" y="15" width="1" height="111" fill="#7a2840"/><rect x="906" y="16" width="1" height="110" fill="#ffb0c4"/><rect x="907" y="16" width="2" height="110" fill="#700070"/><rect x="909" y="17" width="1" height="109" fill="#f8e0f8"/><rect x="910" y="17" width="1" height="109" fill="#200050"/><rect x="911" y="17" width="1" height="109" fill="#7a2840"/><rect x="912" y="18" width="1" height="108" fill="#ffb0c4"/><rect x="913" y="16" width="2" height="110" fill="#700070"/><rect x="915" y="17" width="1" height="109" fill="#f8e0f8"/><rect x="916" y="16" width="1" height="110" fill="#200050"/><rect x="917" y="16" width="1" height="110" fill="#7a2840"/><rect x="918" y="17" width="1" height="109" fill="#ffb0c4"/><rect x="919" y="16" width="2" height="110" fill="#700070"/><rect x="921" y="17" width="1" height="109" fill="#f8e0f8"/><rect x="922" y="16" width="1" height="110" fill="#200050"/><rect x="923" y="16" width="1" height="110" fill="#7a2840"/><rect x="924" y="17" width="1" height="109" fill="#ffb0c4"/><rect x="925" y="15" width="2" height="111" fill="#700070"/><rect x="927" y="16" width="1" height="110" fill="#f8e0f8"/><rect x="928" y="16" width="1" height="110" fill="#200050"/><rect x="929" y="16" width="1" height="110" fill="#7a2840"/><rect x="930" y="17" width="1" height="109" fill="#ffb0c4"/><rect x="931" y="16" width="2" height="110" fill="#700070"/><rect x="933" y="17" width="1" height="109" fill="#f8e0f8"/><rect x="934" y="15" width="1" height="111" fill="#200050"/><rect x="935" y="15" width="1" height="111" fill="#7a2840"/><rect x="936" y="16" width="1" height="110" fill="#ffb0c4"/><rect x="937" y="16" width="2" height="110" fill="#700070"/><rect x="939" y="17" width="1" height="109" fill="#f8e0f8"/><rect x="940" y="15" width="1" height="111" fill="#200050"/><rect x="941" y="15" width="1" height="111" fill="#7a2840"/><rect x="942" y="16" width="1" height="110" fill="#ffb0c4"/><rect x="943" y="16" width="2" height="110" fill="#700070"/><rect x="945" y="17" width="1" height="109" fill="#f8e0f8"/><rect x="946" y="16" width="1" height="110" fill="#200050"/><rect x="947" y="16" width="1" height="110" fill="#7a2840"/><rect x="948" y="17" width="1" height="109" fill="#ffb0c4"/><rect x="949" y="16" width="2" height="110" fill="#700070"/><rect x="951" y="17" width="1" height="109" fill="#f8e0f8"/><rect x="952" y="15" width="1" height="111" fill="#200050"/><rect x="953" y="15" width="1" height="111" fill="#7a2840"/><rect x="954" y="16" width="1" height="110" fill="#ffb0c4"/><rect x="955" y="16" width="2" height="110" fill="#700070"/><rect x="957" y="17" width="1" height="109" fill="#f8e0f8"/><rect x="958" y="17" width="1" height="109" fill="#200050"/><rect x="959" y="17" width="1" height="109" fill="#7a2840"/><rect x="960" y="18" width="1" height="108" fill="#ffb0c4"/><rect x="961" y="15" width="2" height="111" fill="#700070"/><rect x="963" y="16" width="1" height="110" fill="#f8e0f8"/><rect x="964" y="15" width="1" height="111" fill="#200050"/><rect x="965" y="15" width="1" height="111" fill="#7a2840"/><rect x="966" y="16" width="1" height="110" fill="#ffb0c4"/><rect x="967" y="15" width="2" height="111" fill="#700070"/><rect x="969" y="16" width="1" height="110" fill="#f8e0f8"/><rect x="970" y="17" width="1" height="109" fill="#200050"/><rect x="971" y="17" width="1" height="109" fill="#7a2840"/><rect x="972" y="18" width="1" height="108" fill="#ffb0c4"/><rect x="973" y="16" width="2" height="110" fill="#700070"/><rect x="975" y="17" width="1" height="109" fill="#f8e0f8"/><rect x="976" y="17" width="1" height="109" fill="#200050"/><rect x="977" y="17" width="1" height="109" fill="#7a2840"/><rect x="978" y="18" width="1" height="108" fill="#ffb0c4"/><rect x="979" y="15" width="2" height="111" fill="#700070"/><rect x="981" y="16" width="1" height="110" fill="#f8e0f8"/><rect x="982" y="16" width="1" height="110" fill="#200050"/><rect x="983" y="16" width="1" height="110" fill="#7a2840"/><rect x="984" y="17" width="1" height="109" fill="#ffb0c4"/><rect x="985" y="17" width="2" height="109" fill="#700070"/><rect x="987" y="18" width="1" height="108" fill="#f8e0f8"/><rect x="988" y="15" width="1" height="111" fill="#200050"/><rect x="989" y="15" width="1" height="111" fill="#7a2840"/><rect x="990" y="16" width="1" height="110" fill="#ffb0c4"/><rect x="991" y="15" width="2" height="111" fill="#700070"/><rect x="993" y="16" width="1" height="110" fill="#f8e0f8"/><rect x="994" y="16" width="1" height="110" fill="#200050"/><rect x="995" y="16" width="1" height="110" fill="#7a2840"/><rect x="996" y="17" width="1" height="109" fill="#ffb0c4"/><rect x="997" y="17" width="2" height="109" fill="#700070"/><rect x="999" y="18" width="1" height="108" fill="#f8e0f8"/><rect x="1000" y="16" width="1" height="110" fill="#200050"/><rect x="1001" y="16" width="1" height="110" fill="#7a2840"/><rect x="1002" y="17" width="1" height="109" fill="#ffb0c4"/><rect x="1003" y="16" width="2" height="110" fill="#700070"/><rect x="1005" y="17" width="1" height="109" fill="#f8e0f8"/><rect x="1006" y="16" width="1" height="110" fill="#200050"/><rect x="1007" y="16" width="1" height="110" fill="#7a2840"/><rect x="1008" y="17" width="1" height="109" fill="#ffb0c4"/><rect x="1009" y="16" width="2" height="110" fill="#700070"/><rect x="1011" y="17" width="1" height="109" fill="#f8e0f8"/><rect x="1012" y="17" width="1" height="109" fill="#200050"/><rect x="1013" y="17" width="1" height="109" fill="#7a2840"/><rect x="1014" y="18" width="1" height="108" fill="#ffb0c4"/><rect x="1015" y="16" width="2" height="110" fill="#700070"/><rect x="1017" y="17" width="1" height="109" fill="#f8e0f8"/><rect x="1018" y="16" width="1" height="110" fill="#200050"/><rect x="1019" y="16" width="1" height="110" fill="#7a2840"/><rect x="1020" y="17" width="1" height="109" fill="#ffb0c4"/><rect x="1021" y="15" width="2" height="111" fill="#700070"/><rect x="1023" y="16" width="1" height="110" fill="#f8e0f8"/><rect x="1024" y="15" width="1" height="111" fill="#200050"/><rect x="1025" y="15" width="1" height="111" fill="#7a2840"/><rect x="1026" y="16" width="1" height="110" fill="#ffb0c4"/><rect x="1027" y="16" width="2" height="110" fill="#700070"/><rect x="1029" y="17" width="1" height="109" fill="#f8e0f8"/><rect x="1030" y="16" width="1" height="110" fill="#200050"/><rect x="1031" y="16" width="1" height="110" fill="#7a2840"/><rect x="1032" y="17" width="1" height="109" fill="#ffb0c4"/><rect x="1033" y="16" width="2" height="110" fill="#700070"/><rect x="1035" y="17" width="1" height="109" fill="#f8e0f8"/><rect x="1036" y="16" width="1" height="110" fill="#200050"/><rect x="1037" y="16" width="1" height="110" fill="#7a2840"/><rect x="1038" y="17" width="1" height="109" fill="#ffb0c4"/><rect x="1039" y="16" width="2" height="110" fill="#700070"/><rect x="1041" y="17" width="1" height="109" fill="#f8e0f8"/><rect x="1042" y="15" width="1" height="111" fill="#200050"/><rect x="1043" y="15" width="1" height="111" fill="#7a2840"/><rect x="1044" y="16" width="1" height="110" fill="#ffb0c4"/><rect x="1046" y="16" width="1" height="110" fill="#200050"/><rect x="1047" y="16" width="1" height="110" fill="#7a2840"/><rect x="1048" y="17" width="1" height="109" fill="#ffb0c4"/><rect x="1049" y="15" width="2" height="111" fill="#700070"/><rect x="1051" y="16" width="1" height="110" fill="#f8e0f8"/><rect x="1052" y="16" width="1" height="110" fill="#200050"/><rect x="1053" y="16" width="1" height="110" fill="#7a2840"/><rect x="1054" y="17" width="1" height="109" fill="#ffb0c4"/><rect x="1055" y="16" width="2" height="110" fill="#700070"/><rect x="1057" y="17" width="1" height="109" fill="#f8e0f8"/><rect x="1058" y="16" width="1" height="110" fill="#200050"/><rect x="1059" y="16" width="1" height="110" fill="#7a2840"/><rect x="1060" y="17" width="1" height="109" fill="#ffb0c4"/><rect x="1061" y="16" width="2" height="110" fill="#700070"/><rect x="1063" y="17" width="1" height="109" fill="#f8e0f8"/><rect x="1064" y="17" width="1" height="109" fill="#200050"/><rect x="1065" y="17" width="1" height="109" fill="#7a2840"/><rect x="1066" y="18" width="1" height="108" fill="#ffb0c4"/><rect x="1067" y="15" width="2" height="111" fill="#700070"/><rect x="1069" y="16" width="1" height="110" fill="#f8e0f8"/><rect x="1070" y="16" width="1" height="110" fill="#200050"/><rect x="1071" y="16" width="1" height="110" fill="#7a2840"/><rect x="1072" y="17" width="1" height="109" fill="#ffb0c4"/><rect x="1073" y="17" width="2" height="109" fill="#700070"/><rect x="1075" y="18" width="1" height="108" fill="#f8e0f8"/><rect x="1076" y="16" width="1" height="110" fill="#200050"/><rect x="1077" y="16" width="1" height="110" fill="#7a2840"/><rect x="1078" y="17" width="1" height="109" fill="#ffb0c4"/><rect x="1079" y="16" width="2" height="110" fill="#700070"/><rect x="1081" y="17" width="1" height="109" fill="#f8e0f8"/><rect x="1082" y="17" width="1" height="109" fill="#200050"/><rect x="1083" y="17" width="1" height="109" fill="#7a2840"/><rect x="1084" y="18" width="1" height="108" fill="#ffb0c4"/><rect x="1085" y="15" width="2" height="111" fill="#700070"/><rect x="1087" y="16" width="1" height="110" fill="#f8e0f8"/><rect x="1088" y="17" width="1" height="109" fill="#200050"/><rect x="1089" y="17" width="1" height="109" fill="#7a2840"/><rect x="1090" y="18" width="1" height="108" fill="#ffb0c4"/><rect x="1091" y="16" width="2" height="110" fill="#700070"/><rect x="1093" y="17" width="1" height="109" fill="#f8e0f8"/><rect x="1094" y="15" width="1" height="111" fill="#200050"/><rect x="1095" y="15" width="1" height="111" fill="#7a2840"/><rect x="1096" y="16" width="1" height="110" fill="#ffb0c4"/><rect x="1097" y="16" width="2" height="110" fill="#700070"/><rect x="1099" y="17" width="1" height="109" fill="#f8e0f8"/><rect x="1100" y="17" width="1" height="109" fill="#200050"/><rect x="1101" y="17" width="1" height="109" fill="#7a2840"/><rect x="1102" y="18" width="1" height="108" fill="#ffb0c4"/><rect x="1103" y="16" width="2" height="110" fill="#700070"/><rect x="1105" y="17" width="1" height="109" fill="#f8e0f8"/><rect x="1106" y="16" width="1" height="110" fill="#200050"/><rect x="1107" y="16" width="1" height="110" fill="#7a2840"/><rect x="1108" y="17" width="1" height="109" fill="#ffb0c4"/><rect x="1109" y="16" width="2" height="110" fill="#700070"/><rect x="1111" y="17" width="1" height="109" fill="#f8e0f8"/><rect x="1112" y="16" width="1" height="110" fill="#200050"/><rect x="1113" y="16" width="1" height="110" fill="#7a2840"/><rect x="1114" y="17" width="1" height="109" fill="#ffb0c4"/><rect x="1115" y="17" width="2" height="109" fill="#700070"/><rect x="1117" y="18" width="1" height="108" fill="#f8e0f8"/><rect x="1118" y="21" width="1" height="105" fill="#200050"/><rect x="1119" y="21" width="1" height="105" fill="#7a2840"/><rect x="1120" y="22" width="1" height="104" fill="#ffb0c4"/><rect x="1121" y="21" width="2" height="105" fill="#700070"/><rect x="1123" y="22" width="1" height="104" fill="#f8e0f8"/><rect x="1124" y="21" width="1" height="105" fill="#200050"/><rect x="1125" y="21" width="1" height="105" fill="#7a2840"/><rect x="1126" y="22" width="1" height="104" fill="#ffb0c4"/><rect x="1127" y="19" width="2" height="107" fill="#700070"/><rect x="1129" y="20" width="1" height="106" fill="#f8e0f8"/><rect x="1130" y="21" width="1" height="105" fill="#200050"/><rect x="1131" y="21" width="1" height="105" fill="#7a2840"/><rect x="1132" y="22" width="1" height="104" fill="#ffb0c4"/><rect x="1133" y="19" width="2" height="107" fill="#700070"/><rect x="1135" y="20" width="1" height="106" fill="#f8e0f8"/><rect x="1136" y="14" width="1" height="112" fill="#200050"/><rect x="1137" y="14" width="1" height="112" fill="#7a2840"/><rect x="1138" y="15" width="1" height="111" fill="#ffb0c4"/><rect x="1139" y="15" width="2" height="111" fill="#700070"/><rect x="1141" y="16" width="1" height="110" fill="#f8e0f8"/><rect x="1142" y="14" width="1" height="112" fill="#200050"/><rect x="1143" y="14" width="1" height="112" fill="#7a2840"/><rect x="1144" y="15" width="1" height="111" fill="#ffb0c4"/><rect x="1145" y="14" width="2" height="112" fill="#700070"/><rect x="1147" y="15" width="1" height="111" fill="#f8e0f8"/><rect x="1148" y="14" width="1" height="112" fill="#200050"/><rect x="1149" y="14" width="1" height="112" fill="#7a2840"/><rect x="1150" y="15" width="1" height="111" fill="#ffb0c4"/></svg>
<div class="r" style="left:23px;top:380px;width:103px;height:36px;background:#fff;border:1px solid #000;border-left-width:2px;"></div>
<div class="r" style="left:27px;top:384px;width:12px;height:11px;background:#0000ff;border:1px solid #000050;"></div>
<div class="r" style="left:27px;top:400px;width:12px;height:11px;background:#ff0000;border:1px solid #500000;"></div>
<div class="t" style="left:43px;top:385px;">Tx:</div>
<div class="t" style="left:64px;top:385px;">952.3 Mbps</div>
<div class="t" style="left:43px;top:401px;">Rx:</div>
<div class="t" style="left:65px;top:401px;">951.9 Mbps</div>
<div class="r" style="left:19px;top:429px;width:1153px;height:1px;background:#808080;"></div>
<div class="r" style="left:19px;top:429px;width:1px;height:129px;background:#808080;"></div>
<div class="r" style="left:20px;top:430px;width:1151px;height:1px;background:#404040;"></div>
<div class="r" style="left:20px;top:430px;width:1px;height:127px;background:#404040;"></div>
<div class="r" style="left:19px;top:558px;width:1154px;height:1px;background:#fff;"></div>
<div class="r" style="left:1172px;top:429px;width:1px;height:130px;background:#fff;"></div>
<div class="r" style="left:21px;top:431px;width:1150px;height:126px;background:#fff;"></div>
<div class="r" style="left:20px;top:557px;width:1152px;height:1px;background:#d4d0c8;"></div>
<div class="r" style="left:1171px;top:430px;width:1px;height:128px;background:#d4d0c8;"></div>
<svg class="r" style="left:21px;top:431px" width="1150" height="126"><rect x="3" y="0" width="1" height="126" fill="#c8c8c8"/><rect x="18" y="0" width="1" height="126" fill="#c8c8c8"/><rect x="33" y="0" width="1" height="126" fill="#c8c8c8"/><rect x="48" y="0" width="1" height="126" fill="#c8c8c8"/><rect x="63" y="0" width="1" height="126" fill="#c8c8c8"/><rect x="78" y="0" width="1" height="126" fill="#c8c8c8"/><rect x="93" y="0" width="1" height="126" fill="#c8c8c8"/><rect x="108" y="0" width="1" height="126" fill="#c8c8c8"/><rect x="123" y="0" width="1" height="126" fill="#c8c8c8"/><rect x="138" y="0" width="1" height="126" fill="#c8c8c8"/><rect x="153" y="0" width="1" height="126" fill="#c8c8c8"/><rect x="168" y="0" width="1" height="126" fill="#c8c8c8"/><rect x="183" y="0" width="1" height="126" fill="#c8c8c8"/><rect x="198" y="0" width="1" height="126" fill="#c8c8c8"/><rect x="213" y="0" width="1" height="126" fill="#c8c8c8"/><rect x="228" y="0" width="1" height="126" fill="#c8c8c8"/><rect x="243" y="0" width="1" height="126" fill="#c8c8c8"/><rect x="258" y="0" width="1" height="126" fill="#c8c8c8"/><rect x="273" y="0" width="1" height="126" fill="#c8c8c8"/><rect x="289" y="0" width="1" height="126" fill="#c8c8c8"/><rect x="304" y="0" width="1" height="126" fill="#c8c8c8"/><rect x="319" y="0" width="1" height="126" fill="#c8c8c8"/><rect x="334" y="0" width="1" height="126" fill="#c8c8c8"/><rect x="349" y="0" width="1" height="126" fill="#c8c8c8"/><rect x="364" y="0" width="1" height="126" fill="#c8c8c8"/><rect x="379" y="0" width="1" height="126" fill="#c8c8c8"/><rect x="394" y="0" width="1" height="126" fill="#c8c8c8"/><rect x="409" y="0" width="1" height="126" fill="#c8c8c8"/><rect x="424" y="0" width="1" height="126" fill="#c8c8c8"/><rect x="439" y="0" width="1" height="126" fill="#c8c8c8"/><rect x="454" y="0" width="1" height="126" fill="#c8c8c8"/><rect x="469" y="0" width="1" height="126" fill="#c8c8c8"/><rect x="484" y="0" width="1" height="126" fill="#c8c8c8"/><rect x="499" y="0" width="1" height="126" fill="#c8c8c8"/><rect x="514" y="0" width="1" height="126" fill="#c8c8c8"/><rect x="529" y="0" width="1" height="126" fill="#c8c8c8"/><rect x="544" y="0" width="1" height="126" fill="#c8c8c8"/><rect x="560" y="0" width="1" height="126" fill="#c8c8c8"/><rect x="575" y="0" width="1" height="126" fill="#c8c8c8"/><rect x="590" y="0" width="1" height="126" fill="#c8c8c8"/><rect x="605" y="0" width="1" height="126" fill="#c8c8c8"/><rect x="620" y="0" width="1" height="126" fill="#c8c8c8"/><rect x="635" y="0" width="1" height="126" fill="#c8c8c8"/><rect x="650" y="0" width="1" height="126" fill="#c8c8c8"/><rect x="665" y="0" width="1" height="126" fill="#c8c8c8"/><rect x="680" y="0" width="1" height="126" fill="#c8c8c8"/><rect x="695" y="0" width="1" height="126" fill="#c8c8c8"/><rect x="710" y="0" width="1" height="126" fill="#c8c8c8"/><rect x="725" y="0" width="1" height="126" fill="#c8c8c8"/><rect x="740" y="0" width="1" height="126" fill="#c8c8c8"/><rect x="755" y="0" width="1" height="126" fill="#c8c8c8"/><rect x="770" y="0" width="1" height="126" fill="#c8c8c8"/><rect x="785" y="0" width="1" height="126" fill="#c8c8c8"/><rect x="800" y="0" width="1" height="126" fill="#c8c8c8"/><rect x="815" y="0" width="1" height="126" fill="#c8c8c8"/><rect x="831" y="0" width="1" height="126" fill="#c8c8c8"/><rect x="846" y="0" width="1" height="126" fill="#c8c8c8"/><rect x="861" y="0" width="1" height="126" fill="#c8c8c8"/><rect x="876" y="0" width="1" height="126" fill="#c8c8c8"/><rect x="891" y="0" width="1" height="126" fill="#c8c8c8"/><rect x="906" y="0" width="1" height="126" fill="#c8c8c8"/><rect x="921" y="0" width="1" height="126" fill="#c8c8c8"/><rect x="936" y="0" width="1" height="126" fill="#c8c8c8"/><rect x="951" y="0" width="1" height="126" fill="#c8c8c8"/><rect x="966" y="0" width="1" height="126" fill="#c8c8c8"/><rect x="981" y="0" width="1" height="126" fill="#c8c8c8"/><rect x="996" y="0" width="1" height="126" fill="#c8c8c8"/><rect x="1011" y="0" width="1" height="126" fill="#c8c8c8"/><rect x="1026" y="0" width="1" height="126" fill="#c8c8c8"/><rect x="1041" y="0" width="1" height="126" fill="#c8c8c8"/><rect x="1056" y="0" width="1" height="126" fill="#c8c8c8"/><rect x="1071" y="0" width="1" height="126" fill="#c8c8c8"/><rect x="1086" y="0" width="1" height="126" fill="#c8c8c8"/><rect x="1102" y="0" width="1" height="126" fill="#c8c8c8"/><rect x="1117" y="0" width="1" height="126" fill="#c8c8c8"/><rect x="1132" y="0" width="1" height="126" fill="#c8c8c8"/><rect x="1147" y="0" width="1" height="126" fill="#c8c8c8"/><rect x="0" y="6" width="1150" height="1" fill="#c8c8c8"/><rect x="0" y="21" width="1150" height="1" fill="#c8c8c8"/><rect x="0" y="36" width="1150" height="1" fill="#c8c8c8"/><rect x="0" y="51" width="1150" height="1" fill="#c8c8c8"/><rect x="0" y="66" width="1150" height="1" fill="#c8c8c8"/><rect x="0" y="81" width="1150" height="1" fill="#c8c8c8"/><rect x="0" y="96" width="1150" height="1" fill="#c8c8c8"/><rect x="0" y="111" width="1150" height="1" fill="#c8c8c8"/><rect x="419" y="52" width="2" height="74" fill="#700070"/><rect x="421" y="53" width="1" height="73" fill="#f8e0f8"/><rect x="422" y="53" width="1" height="73" fill="#200050"/><rect x="423" y="53" width="1" height="73" fill="#7a2840"/><rect x="424" y="54" width="1" height="72" fill="#ffb0c4"/><rect x="425" y="52" width="2" height="74" fill="#700070"/><rect x="427" y="53" width="1" height="73" fill="#f8e0f8"/><rect x="428" y="52" width="1" height="74" fill="#200050"/><rect x="429" y="52" width="1" height="74" fill="#7a2840"/><rect x="430" y="53" width="1" height="73" fill="#ffb0c4"/><rect x="431" y="52" width="2" height="74" fill="#700070"/><rect x="433" y="53" width="1" height="73" fill="#f8e0f8"/><rect x="434" y="52" width="1" height="74" fill="#200050"/><rect x="435" y="52" width="1" height="74" fill="#7a2840"/><rect x="436" y="53" width="1" height="73" fill="#ffb0c4"/><rect x="437" y="52" width="2" height="74" fill="#700070"/><rect x="439" y="53" width="1" height="73" fill="#f8e0f8"/><rect x="440" y="52" width="1" height="74" fill="#200050"/><rect x="441" y="52" width="1" height="74" fill="#7a2840"/><rect x="442" y="53" width="1" height="73" fill="#ffb0c4"/><rect x="443" y="53" width="2" height="73" fill="#700070"/><rect x="445" y="54" width="1" height="72" fill="#f8e0f8"/><rect x="446" y="52" width="1" height="74" fill="#200050"/><rect x="447" y="52" width="1" height="74" fill="#7a2840"/><rect x="448" y="53" width="1" height="73" fill="#ffb0c4"/><rect x="449" y="52" width="2" height="74" fill="#700070"/><rect x="451" y="53" width="1" height="73" fill="#f8e0f8"/><rect x="452" y="52" width="1" height="74" fill="#200050"/><rect x="453" y="52" width="1" height="74" fill="#7a2840"/><rect x="454" y="53" width="1" height="73" fill="#ffb0c4"/><rect x="455" y="53" width="2" height="73" fill="#700070"/><rect x="457" y="54" width="1" height="72" fill="#f8e0f8"/><rect x="458" y="52" width="1" height="74" fill="#200050"/><rect x="459" y="52" width="1" height="74" fill="#7a2840"/><rect x="460" y="53" width="1" height="73" fill="#ffb0c4"/><rect x="461" y="53" width="2" height="73" fill="#700070"/><rect x="463" y="54" width="1" height="72" fill="#f8e0f8"/><rect x="464" y="52" width="1" height="74" fill="#200050"/><rect x="465" y="52" width="1" height="74" fill="#7a2840"/><rect x="466" y="53" width="1" height="73" fill="#ffb0c4"/><rect x="467" y="52" width="2" height="74" fill="#700070"/><rect x="469" y="53" width="1" height="73" fill="#f8e0f8"/><rect x="470" y="52" width="1" height="74" fill="#200050"/><rect x="471" y="52" width="1" height="74" fill="#7a2840"/><rect x="472" y="53" width="1" height="73" fill="#ffb0c4"/><rect x="473" y="53" width="2" height="73" fill="#700070"/><rect x="475" y="54" width="1" height="72" fill="#f8e0f8"/><rect x="476" y="52" width="1" height="74" fill="#200050"/><rect x="477" y="52" width="1" height="74" fill="#7a2840"/><rect x="478" y="53" width="1" height="73" fill="#ffb0c4"/><rect x="479" y="53" width="2" height="73" fill="#700070"/><rect x="481" y="54" width="1" height="72" fill="#f8e0f8"/><rect x="482" y="52" width="1" height="74" fill="#200050"/><rect x="483" y="52" width="1" height="74" fill="#7a2840"/><rect x="484" y="53" width="1" height="73" fill="#ffb0c4"/><rect x="485" y="53" width="2" height="73" fill="#700070"/><rect x="487" y="54" width="1" height="72" fill="#f8e0f8"/><rect x="488" y="52" width="1" height="74" fill="#200050"/><rect x="489" y="52" width="1" height="74" fill="#7a2840"/><rect x="490" y="53" width="1" height="73" fill="#ffb0c4"/><rect x="491" y="52" width="2" height="74" fill="#700070"/><rect x="493" y="53" width="1" height="73" fill="#f8e0f8"/><rect x="494" y="53" width="1" height="73" fill="#200050"/><rect x="495" y="53" width="1" height="73" fill="#7a2840"/><rect x="496" y="54" width="1" height="72" fill="#ffb0c4"/><rect x="497" y="53" width="2" height="73" fill="#700070"/><rect x="499" y="54" width="1" height="72" fill="#f8e0f8"/><rect x="500" y="53" width="1" height="73" fill="#200050"/><rect x="501" y="53" width="1" height="73" fill="#7a2840"/><rect x="502" y="54" width="1" height="72" fill="#ffb0c4"/><rect x="503" y="52" width="2" height="74" fill="#700070"/><rect x="505" y="53" width="1" height="73" fill="#f8e0f8"/><rect x="506" y="52" width="1" height="74" fill="#200050"/><rect x="507" y="52" width="1" height="74" fill="#7a2840"/><rect x="508" y="53" width="1" height="73" fill="#ffb0c4"/><rect x="509" y="52" width="2" height="74" fill="#700070"/><rect x="511" y="53" width="1" height="73" fill="#f8e0f8"/><rect x="512" y="52" width="1" height="74" fill="#200050"/><rect x="513" y="52" width="1" height="74" fill="#7a2840"/><rect x="514" y="53" width="1" height="73" fill="#ffb0c4"/><rect x="515" y="52" width="2" height="74" fill="#700070"/><rect x="517" y="53" width="1" height="73" fill="#f8e0f8"/><rect x="518" y="52" width="1" height="74" fill="#200050"/><rect x="519" y="52" width="1" height="74" fill="#7a2840"/><rect x="520" y="53" width="1" height="73" fill="#ffb0c4"/><rect x="521" y="53" width="2" height="73" fill="#700070"/><rect x="523" y="54" width="1" height="72" fill="#f8e0f8"/><rect x="525" y="52" width="2" height="74" fill="#700070"/><rect x="527" y="53" width="1" height="73" fill="#f8e0f8"/><rect x="528" y="53" width="1" height="73" fill="#200050"/><rect x="529" y="53" width="1" height="73" fill="#7a2840"/><rect x="530" y="54" width="1" height="72" fill="#ffb0c4"/><rect x="531" y="52" width="2" height="74" fill="#700070"/><rect x="533" y="53" width="1" height="73" fill="#f8e0f8"/><rect x="534" y="52" width="1" height="74" fill="#200050"/><rect x="535" y="52" width="1" height="74" fill="#7a2840"/><rect x="536" y="53" width="1" height="73" fill="#ffb0c4"/><rect x="537" y="52" width="2" height="74" fill="#700070"/><rect x="539" y="53" width="1" height="73" fill="#f8e0f8"/><rect x="540" y="52" width="1" height="74" fill="#200050"/><rect x="541" y="52" width="1" height="74" fill="#7a2840"/><rect x="542" y="53" width="1" height="73" fill="#ffb0c4"/><rect x="543" y="52" width="2" height="74" fill="#700070"/><rect x="545" y="53" width="1" height="73" fill="#f8e0f8"/><rect x="546" y="52" width="1" height="74" fill="#200050"/><rect x="547" y="52" width="1" height="74" fill="#7a2840"/><rect x="548" y="53" width="1" height="73" fill="#ffb0c4"/><rect x="549" y="52" width="2" height="74" fill="#700070"/><rect x="551" y="53" width="1" height="73" fill="#f8e0f8"/><rect x="552" y="53" width="1" height="73" fill="#200050"/><rect x="553" y="53" width="1" height="73" fill="#7a2840"/><rect x="554" y="54" width="1" height="72" fill="#ffb0c4"/><rect x="555" y="52" width="2" height="74" fill="#700070"/><rect x="557" y="53" width="1" height="73" fill="#f8e0f8"/><rect x="558" y="52" width="1" height="74" fill="#200050"/><rect x="559" y="52" width="1" height="74" fill="#7a2840"/><rect x="560" y="53" width="1" height="73" fill="#ffb0c4"/><rect x="561" y="52" width="2" height="74" fill="#700070"/><rect x="563" y="53" width="1" height="73" fill="#f8e0f8"/><rect x="564" y="52" width="1" height="74" fill="#200050"/><rect x="565" y="52" width="1" height="74" fill="#7a2840"/><rect x="566" y="53" width="1" height="73" fill="#ffb0c4"/><rect x="567" y="52" width="2" height="74" fill="#700070"/><rect x="569" y="53" width="1" height="73" fill="#f8e0f8"/><rect x="570" y="52" width="1" height="74" fill="#200050"/><rect x="571" y="52" width="1" height="74" fill="#7a2840"/><rect x="572" y="53" width="1" height="73" fill="#ffb0c4"/><rect x="573" y="52" width="2" height="74" fill="#700070"/><rect x="575" y="53" width="1" height="73" fill="#f8e0f8"/><rect x="576" y="52" width="1" height="74" fill="#200050"/><rect x="577" y="52" width="1" height="74" fill="#7a2840"/><rect x="578" y="53" width="1" height="73" fill="#ffb0c4"/><rect x="579" y="52" width="2" height="74" fill="#700070"/><rect x="581" y="53" width="1" height="73" fill="#f8e0f8"/><rect x="582" y="53" width="1" height="73" fill="#200050"/><rect x="583" y="53" width="1" height="73" fill="#7a2840"/><rect x="584" y="54" width="1" height="72" fill="#ffb0c4"/><rect x="585" y="52" width="2" height="74" fill="#700070"/><rect x="587" y="53" width="1" height="73" fill="#f8e0f8"/><rect x="588" y="52" width="1" height="74" fill="#200050"/><rect x="589" y="52" width="1" height="74" fill="#7a2840"/><rect x="590" y="53" width="1" height="73" fill="#ffb0c4"/><rect x="591" y="52" width="2" height="74" fill="#700070"/><rect x="593" y="53" width="1" height="73" fill="#f8e0f8"/><rect x="594" y="53" width="1" height="73" fill="#200050"/><rect x="595" y="53" width="1" height="73" fill="#7a2840"/><rect x="596" y="54" width="1" height="72" fill="#ffb0c4"/><rect x="597" y="53" width="2" height="73" fill="#700070"/><rect x="599" y="54" width="1" height="72" fill="#f8e0f8"/><rect x="600" y="52" width="1" height="74" fill="#200050"/><rect x="601" y="52" width="1" height="74" fill="#7a2840"/><rect x="602" y="53" width="1" height="73" fill="#ffb0c4"/><rect x="603" y="52" width="2" height="74" fill="#700070"/><rect x="605" y="53" width="1" height="73" fill="#f8e0f8"/><rect x="606" y="52" width="1" height="74" fill="#200050"/><rect x="607" y="52" width="1" height="74" fill="#7a2840"/><rect x="608" y="53" width="1" height="73" fill="#ffb0c4"/><rect x="609" y="53" width="2" height="73" fill="#700070"/><rect x="611" y="54" width="1" height="72" fill="#f8e0f8"/><rect x="612" y="52" width="1" height="74" fill="#200050"/><rect x="613" y="52" width="1" height="74" fill="#7a2840"/><rect x="614" y="53" width="1" height="73" fill="#ffb0c4"/><rect x="615" y="52" width="2" height="74" fill="#700070"/><rect x="617" y="53" width="1" height="73" fill="#f8e0f8"/><rect x="618" y="52" width="1" height="74" fill="#200050"/><rect x="619" y="52" width="1" height="74" fill="#7a2840"/><rect x="620" y="53" width="1" height="73" fill="#ffb0c4"/><rect x="621" y="52" width="2" height="74" fill="#700070"/><rect x="623" y="53" width="1" height="73" fill="#f8e0f8"/><rect x="624" y="52" width="1" height="74" fill="#200050"/><rect x="625" y="52" width="1" height="74" fill="#7a2840"/><rect x="626" y="53" width="1" height="73" fill="#ffb0c4"/><rect x="627" y="53" width="2" height="73" fill="#700070"/><rect x="629" y="54" width="1" height="72" fill="#f8e0f8"/><rect x="630" y="52" width="1" height="74" fill="#200050"/><rect x="631" y="52" width="1" height="74" fill="#7a2840"/><rect x="632" y="53" width="1" height="73" fill="#ffb0c4"/><rect x="633" y="52" width="2" height="74" fill="#700070"/><rect x="635" y="53" width="1" height="73" fill="#f8e0f8"/><rect x="636" y="52" width="1" height="74" fill="#200050"/><rect x="637" y="52" width="1" height="74" fill="#7a2840"/><rect x="638" y="53" width="1" height="73" fill="#ffb0c4"/><rect x="639" y="53" width="2" height="73" fill="#700070"/><rect x="641" y="54" width="1" height="72" fill="#f8e0f8"/><rect x="642" y="52" width="1" height="74" fill="#200050"/><rect x="643" y="52" width="1" height="74" fill="#7a2840"/><rect x="644" y="53" width="1" height="73" fill="#ffb0c4"/><rect x="645" y="52" width="2" height="74" fill="#700070"/><rect x="647" y="53" width="1" height="73" fill="#f8e0f8"/><rect x="648" y="52" width="1" height="74" fill="#200050"/><rect x="649" y="52" width="1" height="74" fill="#7a2840"/><rect x="650" y="53" width="1" height="73" fill="#ffb0c4"/><rect x="651" y="52" width="2" height="74" fill="#700070"/><rect x="653" y="53" width="1" height="73" fill="#f8e0f8"/><rect x="654" y="52" width="1" height="74" fill="#200050"/><rect x="655" y="52" width="1" height="74" fill="#7a2840"/><rect x="656" y="53" width="1" height="73" fill="#ffb0c4"/><rect x="657" y="52" width="2" height="74" fill="#700070"/><rect x="659" y="53" width="1" height="73" fill="#f8e0f8"/><rect x="660" y="52" width="1" height="74" fill="#200050"/><rect x="661" y="52" width="1" height="74" fill="#7a2840"/><rect x="662" y="53" width="1" height="73" fill="#ffb0c4"/><rect x="663" y="53" width="2" height="73" fill="#700070"/><rect x="665" y="54" width="1" height="72" fill="#f8e0f8"/><rect x="666" y="52" width="1" height="74" fill="#200050"/><rect x="667" y="52" width="1" height="74" fill="#7a2840"/><rect x="668" y="53" width="1" height="73" fill="#ffb0c4"/><rect x="669" y="52" width="2" height="74" fill="#700070"/><rect x="671" y="53" width="1" height="73" fill="#f8e0f8"/><rect x="672" y="53" width="1" height="73" fill="#200050"/><rect x="673" y="53" width="1" height="73" fill="#7a2840"/><rect x="674" y="54" width="1" height="72" fill="#ffb0c4"/><rect x="675" y="52" width="2" height="74" fill="#700070"/><rect x="677" y="53" width="1" height="73" fill="#f8e0f8"/><rect x="678" y="52" width="1" height="74" fill="#200050"/><rect x="679" y="52" width="1" height="74" fill="#7a2840"/><rect x="680" y="53" width="1" height="73" fill="#ffb0c4"/><rect x="681" y="52" width="2" height="74" fill="#700070"/><rect x="683" y="53" width="1" height="73" fill="#f8e0f8"/><rect x="684" y="53" width="1" height="73" fill="#200050"/><rect x="685" y="53" width="1" height="73" fill="#7a2840"/><rect x="686" y="54" width="1" height="72" fill="#ffb0c4"/><rect x="687" y="53" width="2" height="73" fill="#700070"/><rect x="689" y="54" width="1" height="72" fill="#f8e0f8"/><rect x="690" y="52" width="1" height="74" fill="#200050"/><rect x="691" y="52" width="1" height="74" fill="#7a2840"/><rect x="692" y="53" width="1" height="73" fill="#ffb0c4"/><rect x="693" y="52" width="2" height="74" fill="#700070"/><rect x="695" y="53" width="1" height="73" fill="#f8e0f8"/><rect x="696" y="52" width="1" height="74" fill="#200050"/><rect x="697" y="52" width="1" height="74" fill="#7a2840"/><rect x="698" y="53" width="1" height="73" fill="#ffb0c4"/><rect x="699" y="53" width="2" height="73" fill="#700070"/><rect x="701" y="54" width="1" height="72" fill="#f8e0f8"/><rect x="702" y="52" width="1" height="74" fill="#200050"/><rect x="703" y="52" width="1" height="74" fill="#7a2840"/><rect x="704" y="53" width="1" height="73" fill="#ffb0c4"/><rect x="705" y="53" width="2" height="73" fill="#700070"/><rect x="707" y="54" width="1" height="72" fill="#f8e0f8"/><rect x="708" y="52" width="1" height="74" fill="#200050"/><rect x="709" y="52" width="1" height="74" fill="#7a2840"/><rect x="710" y="53" width="1" height="73" fill="#ffb0c4"/><rect x="711" y="53" width="2" height="73" fill="#700070"/><rect x="713" y="54" width="1" height="72" fill="#f8e0f8"/><rect x="714" y="53" width="1" height="73" fill="#200050"/><rect x="715" y="53" width="1" height="73" fill="#7a2840"/><rect x="716" y="54" width="1" height="72" fill="#ffb0c4"/><rect x="717" y="52" width="2" height="74" fill="#700070"/><rect x="719" y="53" width="1" height="73" fill="#f8e0f8"/><rect x="720" y="52" width="1" height="74" fill="#200050"/><rect x="721" y="52" width="1" height="74" fill="#7a2840"/><rect x="722" y="53" width="1" height="73" fill="#ffb0c4"/><rect x="723" y="52" width="2" height="74" fill="#700070"/><rect x="725" y="53" width="1" height="73" fill="#f8e0f8"/><rect x="726" y="53" width="1" height="73" fill="#200050"/><rect x="727" y="53" width="1" height="73" fill="#7a2840"/><rect x="728" y="54" width="1" height="72" fill="#ffb0c4"/><rect x="729" y="52" width="2" height="74" fill="#700070"/><rect x="731" y="53" width="1" height="73" fill="#f8e0f8"/><rect x="732" y="52" width="1" height="74" fill="#200050"/><rect x="733" y="52" width="1" height="74" fill="#7a2840"/><rect x="734" y="53" width="1" height="73" fill="#ffb0c4"/><rect x="735" y="52" width="2" height="74" fill="#700070"/><rect x="737" y="53" width="1" height="73" fill="#f8e0f8"/><rect x="738" y="52" width="1" height="74" fill="#200050"/><rect x="739" y="52" width="1" height="74" fill="#7a2840"/><rect x="740" y="53" width="1" height="73" fill="#ffb0c4"/><rect x="741" y="52" width="2" height="74" fill="#700070"/><rect x="743" y="53" width="1" height="73" fill="#f8e0f8"/><rect x="744" y="52" width="1" height="74" fill="#200050"/><rect x="745" y="52" width="1" height="74" fill="#7a2840"/><rect x="746" y="53" width="1" height="73" fill="#ffb0c4"/><rect x="747" y="52" width="2" height="74" fill="#700070"/><rect x="749" y="53" width="1" height="73" fill="#f8e0f8"/><rect x="750" y="52" width="1" height="74" fill="#200050"/><rect x="751" y="52" width="1" height="74" fill="#7a2840"/><rect x="752" y="53" width="1" height="73" fill="#ffb0c4"/><rect x="753" y="52" width="2" height="74" fill="#700070"/><rect x="755" y="53" width="1" height="73" fill="#f8e0f8"/><rect x="756" y="53" width="1" height="73" fill="#200050"/><rect x="757" y="53" width="1" height="73" fill="#7a2840"/><rect x="758" y="54" width="1" height="72" fill="#ffb0c4"/><rect x="759" y="52" width="2" height="74" fill="#700070"/><rect x="761" y="53" width="1" height="73" fill="#f8e0f8"/><rect x="762" y="52" width="1" height="74" fill="#200050"/><rect x="763" y="52" width="1" height="74" fill="#7a2840"/><rect x="764" y="53" width="1" height="73" fill="#ffb0c4"/><rect x="765" y="53" width="2" height="73" fill="#700070"/><rect x="767" y="54" width="1" height="72" fill="#f8e0f8"/><rect x="768" y="53" width="1" height="73" fill="#200050"/><rect x="769" y="53" width="1" height="73" fill="#7a2840"/><rect x="770" y="54" width="1" height="72" fill="#ffb0c4"/><rect x="771" y="52" width="2" height="74" fill="#700070"/><rect x="773" y="53" width="1" height="73" fill="#f8e0f8"/><rect x="774" y="52" width="1" height="74" fill="#200050"/><rect x="775" y="52" width="1" height="74" fill="#7a2840"/><rect x="776" y="53" width="1" height="73" fill="#ffb0c4"/><rect x="777" y="52" width="2" height="74" fill="#700070"/><rect x="779" y="53" width="1" height="73" fill="#f8e0f8"/><rect x="780" y="53" width="1" height="73" fill="#200050"/><rect x="781" y="53" width="1" height="73" fill="#7a2840"/><rect x="782" y="54" width="1" height="72" fill="#ffb0c4"/><rect x="783" y="53" width="1" height="73" fill="#300070"/><rect x="784" y="53" width="1" height="73" fill="#0000d0"/><rect x="785" y="53" width="1" height="73" fill="#500080"/><rect x="786" y="54" width="1" height="72" fill="#ffb0c4"/><rect x="787" y="52" width="2" height="74" fill="#700070"/><rect x="789" y="53" width="1" height="73" fill="#f8e0f8"/><rect x="790" y="53" width="1" height="73" fill="#200050"/><rect x="791" y="53" width="1" height="73" fill="#7a2840"/><rect x="792" y="54" width="1" height="72" fill="#ffb0c4"/><rect x="793" y="52" width="2" height="74" fill="#700070"/><rect x="795" y="53" width="1" height="73" fill="#f8e0f8"/><rect x="796" y="52" width="1" height="74" fill="#200050"/><rect x="797" y="52" width="1" height="74" fill="#7a2840"/><rect x="798" y="53" width="1" height="73" fill="#ffb0c4"/><rect x="799" y="52" width="2" height="74" fill="#700070"/><rect x="801" y="53" width="1" height="73" fill="#f8e0f8"/><rect x="802" y="52" width="1" height="74" fill="#200050"/><rect x="803" y="52" width="1" height="74" fill="#7a2840"/><rect x="804" y="53" width="1" height="73" fill="#ffb0c4"/><rect x="805" y="52" width="2" height="74" fill="#700070"/><rect x="807" y="53" width="1" height="73" fill="#f8e0f8"/><rect x="808" y="52" width="1" height="74" fill="#200050"/><rect x="809" y="52" width="1" height="74" fill="#7a2840"/><rect x="810" y="53" width="1" height="73" fill="#ffb0c4"/><rect x="811" y="52" width="2" height="74" fill="#700070"/><rect x="813" y="53" width="1" height="73" fill="#f8e0f8"/><rect x="814" y="53" width="1" height="73" fill="#200050"/><rect x="815" y="53" width="1" height="73" fill="#7a2840"/><rect x="816" y="54" width="1" height="72" fill="#ffb0c4"/><rect x="817" y="53" width="2" height="73" fill="#700070"/><rect x="819" y="54" width="1" height="72" fill="#f8e0f8"/><rect x="820" y="52" width="1" height="74" fill="#200050"/><rect x="821" y="52" width="1" height="74" fill="#7a2840"/><rect x="822" y="53" width="1" height="73" fill="#ffb0c4"/><rect x="823" y="53" width="2" height="73" fill="#700070"/><rect x="825" y="54" width="1" height="72" fill="#f8e0f8"/><rect x="826" y="52" width="1" height="74" fill="#200050"/><rect x="827" y="52" width="1" height="74" fill="#7a2840"/><rect x="828" y="53" width="1" height="73" fill="#ffb0c4"/><rect x="829" y="52" width="2" height="74" fill="#700070"/><rect x="831" y="53" width="1" height="73" fill="#f8e0f8"/><rect x="832" y="52" width="1" height="74" fill="#200050"/><rect x="833" y="52" width="1" height="74" fill="#7a2840"/><rect x="834" y="53" width="1" height="73" fill="#ffb0c4"/><rect x="835" y="52" width="2" height="74" fill="#700070"/><rect x="837" y="53" width="1" height="73" fill="#f8e0f8"/><rect x="838" y="52" width="1" height="74" fill="#200050"/><rect x="839" y="52" width="1" height="74" fill="#7a2840"/><rect x="840" y="53" width="1" height="73" fill="#ffb0c4"/><rect x="841" y="52" width="2" height="74" fill="#700070"/><rect x="843" y="53" width="1" height="73" fill="#f8e0f8"/><rect x="844" y="52" width="1" height="74" fill="#200050"/><rect x="845" y="52" width="1" height="74" fill="#7a2840"/><rect x="846" y="53" width="1" height="73" fill="#ffb0c4"/><rect x="847" y="52" width="2" height="74" fill="#700070"/><rect x="849" y="53" width="1" height="73" fill="#f8e0f8"/><rect x="850" y="52" width="1" height="74" fill="#200050"/><rect x="851" y="52" width="1" height="74" fill="#7a2840"/><rect x="852" y="53" width="1" height="73" fill="#ffb0c4"/><rect x="853" y="52" width="2" height="74" fill="#700070"/><rect x="855" y="53" width="1" height="73" fill="#f8e0f8"/><rect x="856" y="52" width="1" height="74" fill="#200050"/><rect x="857" y="52" width="1" height="74" fill="#7a2840"/><rect x="858" y="53" width="1" height="73" fill="#ffb0c4"/><rect x="859" y="52" width="2" height="74" fill="#700070"/><rect x="861" y="53" width="1" height="73" fill="#f8e0f8"/><rect x="862" y="52" width="1" height="74" fill="#200050"/><rect x="863" y="52" width="1" height="74" fill="#7a2840"/><rect x="864" y="53" width="1" height="73" fill="#ffb0c4"/><rect x="865" y="53" width="2" height="73" fill="#700070"/><rect x="867" y="54" width="1" height="72" fill="#f8e0f8"/><rect x="868" y="52" width="1" height="74" fill="#200050"/><rect x="869" y="52" width="1" height="74" fill="#7a2840"/><rect x="870" y="53" width="1" height="73" fill="#ffb0c4"/><rect x="871" y="53" width="2" height="73" fill="#700070"/><rect x="873" y="54" width="1" height="72" fill="#f8e0f8"/><rect x="874" y="52" width="1" height="74" fill="#200050"/><rect x="875" y="52" width="1" height="74" fill="#7a2840"/><rect x="876" y="53" width="1" height="73" fill="#ffb0c4"/><rect x="877" y="53" width="2" height="73" fill="#700070"/><rect x="879" y="54" width="1" height="72" fill="#f8e0f8"/><rect x="880" y="52" width="1" height="74" fill="#200050"/><rect x="881" y="52" width="1" height="74" fill="#7a2840"/><rect x="882" y="53" width="1" height="73" fill="#ffb0c4"/><rect x="883" y="52" width="2" height="74" fill="#700070"/><rect x="885" y="53" width="1" height="73" fill="#f8e0f8"/><rect x="886" y="52" width="1" height="74" fill="#200050"/><rect x="887" y="52" width="1" height="74" fill="#7a2840"/><rect x="888" y="53" width="1" height="73" fill="#ffb0c4"/><rect x="889" y="52" width="2" height="74" fill="#700070"/><rect x="891" y="53" width="1" height="73" fill="#f8e0f8"/><rect x="892" y="52" width="1" height="74" fill="#200050"/><rect x="893" y="52" width="1" height="74" fill="#7a2840"/><rect x="894" y="53" width="1" height="73" fill="#ffb0c4"/><rect x="895" y="53" width="2" height="73" fill="#700070"/><rect x="897" y="54" width="1" height="72" fill="#f8e0f8"/><rect x="898" y="52" width="1" height="74" fill="#200050"/><rect x="899" y="52" width="1" height="74" fill="#7a2840"/><rect x="900" y="53" width="1" height="73" fill="#ffb0c4"/><rect x="901" y="52" width="2" height="74" fill="#700070"/><rect x="903" y="53" width="1" height="73" fill="#f8e0f8"/><rect x="904" y="52" width="1" height="74" fill="#200050"/><rect x="905" y="52" width="1" height="74" fill="#7a2840"/><rect x="906" y="53" width="1" height="73" fill="#ffb0c4"/><rect x="907" y="52" width="2" height="74" fill="#700070"/><rect x="909" y="53" width="1" height="73" fill="#f8e0f8"/><rect x="910" y="52" width="1" height="74" fill="#200050"/><rect x="911" y="52" width="1" height="74" fill="#7a2840"/><rect x="912" y="53" width="1" height="73" fill="#ffb0c4"/><rect x="913" y="52" width="2" height="74" fill="#700070"/><rect x="915" y="53" width="1" height="73" fill="#f8e0f8"/><rect x="916" y="52" width="1" height="74" fill="#200050"/><rect x="917" y="52" width="1" height="74" fill="#7a2840"/><rect x="918" y="53" width="1" height="73" fill="#ffb0c4"/><rect x="919" y="52" width="2" height="74" fill="#700070"/><rect x="921" y="53" width="1" height="73" fill="#f8e0f8"/><rect x="922" y="52" width="1" height="74" fill="#200050"/><rect x="923" y="52" width="1" height="74" fill="#7a2840"/><rect x="924" y="53" width="1" height="73" fill="#ffb0c4"/><rect x="925" y="52" width="2" height="74" fill="#700070"/><rect x="927" y="53" width="1" height="73" fill="#f8e0f8"/><rect x="928" y="53" width="1" height="73" fill="#200050"/><rect x="929" y="53" width="1" height="73" fill="#7a2840"/><rect x="930" y="54" width="1" height="72" fill="#ffb0c4"/><rect x="931" y="52" width="2" height="74" fill="#700070"/><rect x="933" y="53" width="1" height="73" fill="#f8e0f8"/><rect x="934" y="52" width="1" height="74" fill="#200050"/><rect x="935" y="52" width="1" height="74" fill="#7a2840"/><rect x="936" y="53" width="1" height="73" fill="#ffb0c4"/><rect x="937" y="53" width="2" height="73" fill="#700070"/><rect x="939" y="54" width="1" height="72" fill="#f8e0f8"/><rect x="940" y="52" width="1" height="74" fill="#200050"/><rect x="941" y="52" width="1" height="74" fill="#7a2840"/><rect x="942" y="53" width="1" height="73" fill="#ffb0c4"/><rect x="943" y="52" width="2" height="74" fill="#700070"/><rect x="945" y="53" width="1" height="73" fill="#f8e0f8"/><rect x="946" y="52" width="1" height="74" fill="#200050"/><rect x="947" y="52" width="1" height="74" fill="#7a2840"/><rect x="948" y="53" width="1" height="73" fill="#ffb0c4"/><rect x="949" y="52" width="2" height="74" fill="#700070"/><rect x="951" y="53" width="1" height="73" fill="#f8e0f8"/><rect x="952" y="52" width="1" height="74" fill="#200050"/><rect x="953" y="52" width="1" height="74" fill="#7a2840"/><rect x="954" y="53" width="1" height="73" fill="#ffb0c4"/><rect x="955" y="52" width="2" height="74" fill="#700070"/><rect x="957" y="53" width="1" height="73" fill="#f8e0f8"/><rect x="958" y="52" width="1" height="74" fill="#200050"/><rect x="959" y="52" width="1" height="74" fill="#7a2840"/><rect x="960" y="53" width="1" height="73" fill="#ffb0c4"/><rect x="961" y="52" width="2" height="74" fill="#700070"/><rect x="963" y="53" width="1" height="73" fill="#f8e0f8"/><rect x="964" y="52" width="1" height="74" fill="#200050"/><rect x="965" y="52" width="1" height="74" fill="#7a2840"/><rect x="966" y="53" width="1" height="73" fill="#ffb0c4"/><rect x="967" y="52" width="2" height="74" fill="#700070"/><rect x="969" y="53" width="1" height="73" fill="#f8e0f8"/><rect x="970" y="52" width="1" height="74" fill="#200050"/><rect x="971" y="52" width="1" height="74" fill="#7a2840"/><rect x="972" y="53" width="1" height="73" fill="#ffb0c4"/><rect x="973" y="52" width="2" height="74" fill="#700070"/><rect x="975" y="53" width="1" height="73" fill="#f8e0f8"/><rect x="976" y="52" width="1" height="74" fill="#200050"/><rect x="977" y="52" width="1" height="74" fill="#7a2840"/><rect x="978" y="53" width="1" height="73" fill="#ffb0c4"/><rect x="979" y="52" width="2" height="74" fill="#700070"/><rect x="981" y="53" width="1" height="73" fill="#f8e0f8"/><rect x="982" y="53" width="1" height="73" fill="#200050"/><rect x="983" y="53" width="1" height="73" fill="#7a2840"/><rect x="984" y="54" width="1" height="72" fill="#ffb0c4"/><rect x="985" y="52" width="2" height="74" fill="#700070"/><rect x="987" y="53" width="1" height="73" fill="#f8e0f8"/><rect x="988" y="52" width="1" height="74" fill="#200050"/><rect x="989" y="52" width="1" height="74" fill="#7a2840"/><rect x="990" y="53" width="1" height="73" fill="#ffb0c4"/><rect x="991" y="52" width="2" height="74" fill="#700070"/><rect x="993" y="53" width="1" height="73" fill="#f8e0f8"/><rect x="994" y="52" width="1" height="74" fill="#200050"/><rect x="995" y="52" width="1" height="74" fill="#7a2840"/><rect x="996" y="53" width="1" height="73" fill="#ffb0c4"/><rect x="997" y="52" width="2" height="74" fill="#700070"/><rect x="999" y="53" width="1" height="73" fill="#f8e0f8"/><rect x="1000" y="52" width="1" height="74" fill="#200050"/><rect x="1001" y="52" width="1" height="74" fill="#7a2840"/><rect x="1002" y="53" width="1" height="73" fill="#ffb0c4"/><rect x="1003" y="52" width="2" height="74" fill="#700070"/><rect x="1005" y="53" width="1" height="73" fill="#f8e0f8"/><rect x="1006" y="52" width="1" height="74" fill="#200050"/><rect x="1007" y="52" width="1" height="74" fill="#7a2840"/><rect x="1008" y="53" width="1" height="73" fill="#ffb0c4"/><rect x="1009" y="52" width="2" height="74" fill="#700070"/><rect x="1011" y="53" width="1" height="73" fill="#f8e0f8"/><rect x="1012" y="53" width="1" height="73" fill="#200050"/><rect x="1013" y="53" width="1" height="73" fill="#7a2840"/><rect x="1014" y="54" width="1" height="72" fill="#ffb0c4"/><rect x="1015" y="52" width="2" height="74" fill="#700070"/><rect x="1017" y="53" width="1" height="73" fill="#f8e0f8"/><rect x="1018" y="53" width="1" height="73" fill="#200050"/><rect x="1019" y="53" width="1" height="73" fill="#7a2840"/><rect x="1020" y="54" width="1" height="72" fill="#ffb0c4"/><rect x="1021" y="52" width="2" height="74" fill="#700070"/><rect x="1023" y="53" width="1" height="73" fill="#f8e0f8"/><rect x="1024" y="53" width="1" height="73" fill="#200050"/><rect x="1025" y="53" width="1" height="73" fill="#7a2840"/><rect x="1026" y="54" width="1" height="72" fill="#ffb0c4"/><rect x="1027" y="53" width="2" height="73" fill="#700070"/><rect x="1029" y="54" width="1" height="72" fill="#f8e0f8"/><rect x="1030" y="53" width="1" height="73" fill="#200050"/><rect x="1031" y="53" width="1" height="73" fill="#7a2840"/><rect x="1032" y="54" width="1" height="72" fill="#ffb0c4"/><rect x="1033" y="52" width="2" height="74" fill="#700070"/><rect x="1035" y="53" width="1" height="73" fill="#f8e0f8"/><rect x="1036" y="52" width="1" height="74" fill="#200050"/><rect x="1037" y="52" width="1" height="74" fill="#7a2840"/><rect x="1038" y="53" width="1" height="73" fill="#ffb0c4"/><rect x="1039" y="52" width="2" height="74" fill="#700070"/><rect x="1041" y="53" width="1" height="73" fill="#f8e0f8"/><rect x="1042" y="52" width="1" height="74" fill="#200050"/><rect x="1043" y="52" width="1" height="74" fill="#7a2840"/><rect x="1044" y="53" width="1" height="73" fill="#ffb0c4"/><rect x="1046" y="52" width="1" height="74" fill="#200050"/><rect x="1047" y="52" width="1" height="74" fill="#7a2840"/><rect x="1048" y="53" width="1" height="73" fill="#ffb0c4"/><rect x="1049" y="52" width="2" height="74" fill="#700070"/><rect x="1051" y="53" width="1" height="73" fill="#f8e0f8"/><rect x="1052" y="53" width="1" height="73" fill="#200050"/><rect x="1053" y="53" width="1" height="73" fill="#7a2840"/><rect x="1054" y="54" width="1" height="72" fill="#ffb0c4"/><rect x="1055" y="52" width="2" height="74" fill="#700070"/><rect x="1057" y="53" width="1" height="73" fill="#f8e0f8"/><rect x="1058" y="52" width="1" height="74" fill="#200050"/><rect x="1059" y="52" width="1" height="74" fill="#7a2840"/><rect x="1060" y="53" width="1" height="73" fill="#ffb0c4"/><rect x="1061" y="52" width="2" height="74" fill="#700070"/><rect x="1063" y="53" width="1" height="73" fill="#f8e0f8"/><rect x="1064" y="52" width="1" height="74" fill="#200050"/><rect x="1065" y="52" width="1" height="74" fill="#7a2840"/><rect x="1066" y="53" width="1" height="73" fill="#ffb0c4"/><rect x="1067" y="52" width="2" height="74" fill="#700070"/><rect x="1069" y="53" width="1" height="73" fill="#f8e0f8"/><rect x="1070" y="52" width="1" height="74" fill="#200050"/><rect x="1071" y="52" width="1" height="74" fill="#7a2840"/><rect x="1072" y="53" width="1" height="73" fill="#ffb0c4"/><rect x="1073" y="53" width="2" height="73" fill="#700070"/><rect x="1075" y="54" width="1" height="72" fill="#f8e0f8"/><rect x="1076" y="52" width="1" height="74" fill="#200050"/><rect x="1077" y="52" width="1" height="74" fill="#7a2840"/><rect x="1078" y="53" width="1" height="73" fill="#ffb0c4"/><rect x="1079" y="52" width="2" height="74" fill="#700070"/><rect x="1081" y="53" width="1" height="73" fill="#f8e0f8"/><rect x="1082" y="52" width="1" height="74" fill="#200050"/><rect x="1083" y="52" width="1" height="74" fill="#7a2840"/><rect x="1084" y="53" width="1" height="73" fill="#ffb0c4"/><rect x="1085" y="53" width="2" height="73" fill="#700070"/><rect x="1087" y="54" width="1" height="72" fill="#f8e0f8"/><rect x="1088" y="52" width="1" height="74" fill="#200050"/><rect x="1089" y="52" width="1" height="74" fill="#7a2840"/><rect x="1090" y="53" width="1" height="73" fill="#ffb0c4"/><rect x="1091" y="52" width="2" height="74" fill="#700070"/><rect x="1093" y="53" width="1" height="73" fill="#f8e0f8"/><rect x="1094" y="52" width="1" height="74" fill="#200050"/><rect x="1095" y="52" width="1" height="74" fill="#7a2840"/><rect x="1096" y="53" width="1" height="73" fill="#ffb0c4"/><rect x="1097" y="52" width="2" height="74" fill="#700070"/><rect x="1099" y="53" width="1" height="73" fill="#f8e0f8"/><rect x="1100" y="53" width="1" height="73" fill="#200050"/><rect x="1101" y="53" width="1" height="73" fill="#7a2840"/><rect x="1102" y="54" width="1" height="72" fill="#ffb0c4"/><rect x="1103" y="52" width="2" height="74" fill="#700070"/><rect x="1105" y="53" width="1" height="73" fill="#f8e0f8"/><rect x="1106" y="52" width="1" height="74" fill="#200050"/><rect x="1107" y="52" width="1" height="74" fill="#7a2840"/><rect x="1108" y="53" width="1" height="73" fill="#ffb0c4"/><rect x="1109" y="52" width="2" height="74" fill="#700070"/><rect x="1111" y="53" width="1" height="73" fill="#f8e0f8"/><rect x="1112" y="53" width="1" height="73" fill="#200050"/><rect x="1113" y="53" width="1" height="73" fill="#7a2840"/><rect x="1114" y="54" width="1" height="72" fill="#ffb0c4"/><rect x="1115" y="52" width="2" height="74" fill="#700070"/><rect x="1117" y="53" width="1" height="73" fill="#f8e0f8"/><rect x="1118" y="55" width="1" height="71" fill="#200050"/><rect x="1119" y="55" width="1" height="71" fill="#7a2840"/><rect x="1120" y="56" width="1" height="70" fill="#ffb0c4"/><rect x="1121" y="56" width="2" height="70" fill="#700070"/><rect x="1123" y="57" width="1" height="69" fill="#f8e0f8"/><rect x="1124" y="55" width="1" height="71" fill="#200050"/><rect x="1125" y="55" width="1" height="71" fill="#7a2840"/><rect x="1126" y="56" width="1" height="70" fill="#ffb0c4"/><rect x="1127" y="55" width="2" height="71" fill="#700070"/><rect x="1129" y="56" width="1" height="70" fill="#f8e0f8"/><rect x="1130" y="55" width="1" height="71" fill="#200050"/><rect x="1131" y="55" width="1" height="71" fill="#7a2840"/><rect x="1132" y="56" width="1" height="70" fill="#ffb0c4"/><rect x="1133" y="55" width="2" height="71" fill="#700070"/><rect x="1135" y="56" width="1" height="70" fill="#f8e0f8"/><rect x="1136" y="51" width="1" height="75" fill="#200050"/><rect x="1137" y="51" width="1" height="75" fill="#7a2840"/><rect x="1138" y="52" width="1" height="74" fill="#ffb0c4"/><rect x="1139" y="51" width="2" height="75" fill="#700070"/><rect x="1141" y="52" width="1" height="74" fill="#f8e0f8"/><rect x="1142" y="52" width="1" height="74" fill="#200050"/><rect x="1143" y="52" width="1" height="74" fill="#7a2840"/><rect x="1144" y="53" width="1" height="73" fill="#ffb0c4"/><rect x="1145" y="50" width="2" height="76" fill="#700070"/><rect x="1147" y="51" width="1" height="75" fill="#f8e0f8"/><rect x="1148" y="50" width="1" height="76" fill="#200050"/><rect x="1149" y="50" width="1" height="76" fill="#7a2840"/><rect x="1150" y="51" width="1" height="75" fill="#ffb0c4"/></svg>
<div class="r" style="left:23px;top:517px;width:133px;height:36px;background:#fff;border:1px solid #000;border-left-width:2px;"></div>
<div class="r" style="left:27px;top:521px;width:12px;height:11px;background:#0000ff;border:1px solid #000050;"></div>
<div class="r" style="left:27px;top:537px;width:12px;height:11px;background:#ff0000;border:1px solid #500000;"></div>
<div class="t" style="left:43px;top:522px;">Tx Packet:</div>
<div class="t" style="left:99px;top:522px;">78 736 p/s</div>
<div class="t" style="left:43px;top:538px;">Rx Packet:</div>
<div class="t" style="left:100px;top:538px;">78 702 p/s</div>
<div class="r" style="left:1191px;top:45px;width:62px;height:21px;border:1px solid #000;background:#d4d0c8;box-shadow:inset 1px 1px 0 #fff,1px 1px 0 #fff;"></div>
<div class="t" style="left:1183.0px;width:80px;text-align:center;top:51px;">OK</div>
<div class="r" style="left:1191px;top:71px;width:62px;height:21px;border:1px solid #555;background:#d4d0c8;box-shadow:inset 1px 1px 0 #fff,1px 1px 0 #fff;"></div>
<div class="t" style="left:1183.0px;width:80px;text-align:center;top:77px;">Cancel</div>
<div class="r" style="left:1191px;top:97px;width:62px;height:21px;border:1px solid #555;background:#d4d0c8;box-shadow:inset 1px 1px 0 #fff,1px 1px 0 #fff;"></div>
<div class="t" style="left:1183.0px;width:80px;text-align:center;top:103px;">Apply</div>
<div class="r" style="left:1191px;top:129px;width:62px;height:21px;border:1px solid #555;background:#d4d0c8;box-shadow:inset 1px 1px 0 #fff,1px 1px 0 #fff;"></div>
<div class="t" style="left:1183.0px;width:80px;text-align:center;top:135px;">Disable</div>
<div class="r" style="left:1191px;top:155px;width:62px;height:21px;border:1px solid #555;background:#d4d0c8;box-shadow:inset 1px 1px 0 #fff,1px 1px 0 #fff;"></div>
<div class="t" style="left:1183.0px;width:80px;text-align:center;top:161px;">Comment</div>
<div class="r" style="left:1191px;top:181px;width:62px;height:21px;border:1px solid #555;background:#d4d0c8;box-shadow:inset 1px 1px 0 #fff,1px 1px 0 #fff;"></div>
<div class="t" style="left:1183.0px;width:80px;text-align:center;top:187px;">Copy</div>
<div class="r" style="left:1191px;top:207px;width:62px;height:22px;border:1px solid #555;background:#d4d0c8;box-shadow:inset 1px 1px 0 #fff,1px 1px 0 #fff;"></div>
<div class="t" style="left:1183.0px;width:80px;text-align:center;top:213px;">Remove</div>
<div class="r" style="left:1191px;top:234px;width:62px;height:21px;border:1px solid #555;background:#d4d0c8;box-shadow:inset 1px 1px 0 #fff,1px 1px 0 #fff;"></div>
<div class="t" style="left:1183.0px;width:80px;text-align:center;top:240px;">Torch</div>
<div class="r" style="left:1191px;top:260px;width:62px;height:21px;border:1px solid #555;background:#d4d0c8;box-shadow:inset 1px 1px 0 #fff,1px 1px 0 #fff;"></div>
<div class="t" style="left:1183.0px;width:80px;text-align:center;top:266px;">Scan...</div>
<div class="r" style="left:12px;top:571px;width:411px;height:17px;border-top:1px solid #808080;border-left:1px solid #d4d0c8;box-shadow:1px 1px 0 #eeeae2;"></div>
<div class="t" style="left:14px;top:575px;">enabled</div>
<div class="r" style="left:426px;top:571px;width:412px;height:17px;border-top:1px solid #808080;border-left:1px solid #808080;box-shadow:1px 1px 0 #eeeae2;"></div>
<div class="t" style="left:428px;top:575px;">running</div>
<div class="r" style="left:841px;top:571px;width:416px;height:17px;border-top:1px solid #808080;border-left:1px solid #808080;box-shadow:1px 1px 0 #eeeae2;"></div>
<div class="t" style="left:843px;top:575px;">slave</div>
</body></html>
